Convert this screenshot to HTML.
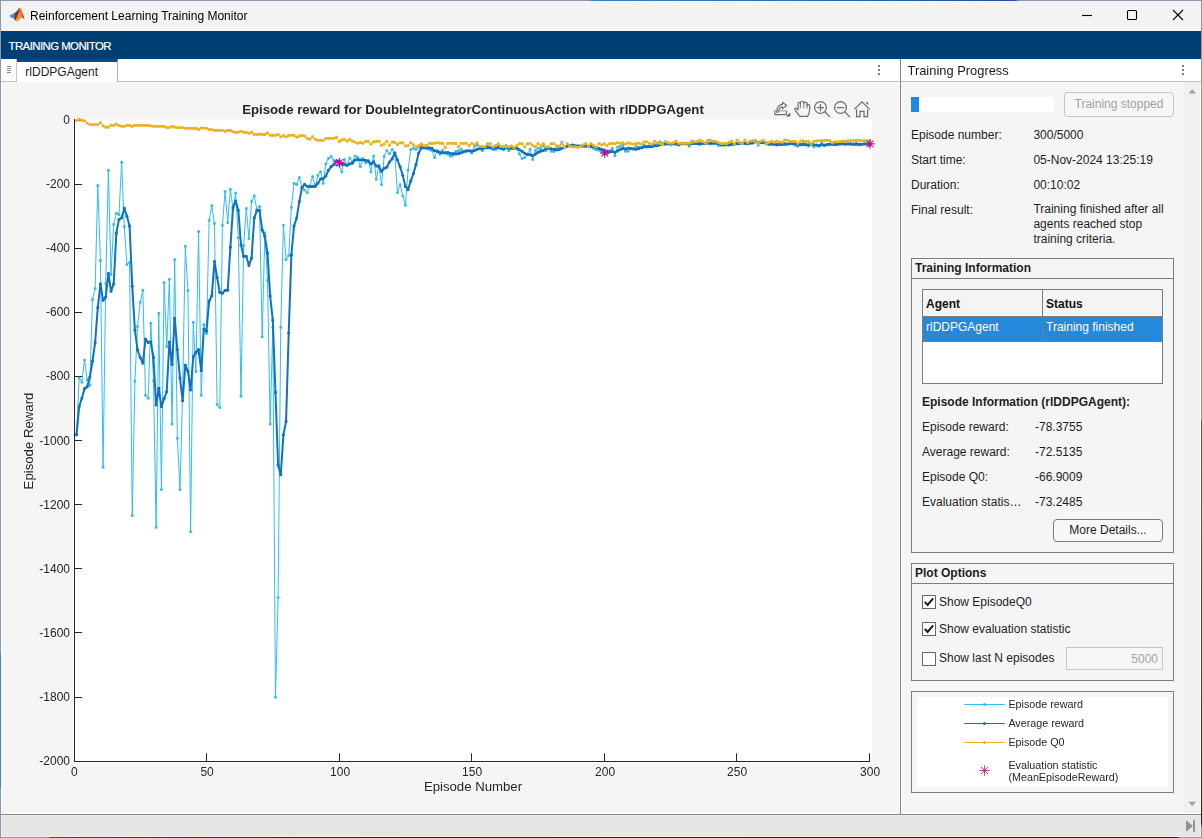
<!DOCTYPE html>
<html lang="en">
<head>
<meta charset="utf-8">
<title>Reinforcement Learning Training Monitor</title>
<style>
*{box-sizing:border-box;margin:0;padding:0}
html,body{width:1202px;height:838px;overflow:hidden;background:#f3f3f3}
body{position:relative;font-family:"Liberation Sans",sans-serif;font-size:12px;color:#1e1e1e;line-height:1}
.abs{position:absolute}
.t{position:absolute;white-space:nowrap;line-height:14px;height:14px}
#frame{position:absolute;left:0;top:0;width:1202px;height:838px;pointer-events:none;z-index:50}
#frame i{position:absolute;display:block}
#bt{left:0;top:0;width:1202px;height:1px;background:linear-gradient(90deg,#8d98a8 0,#8d98a8 588px,#3f7fc0 592px,#2f6cb8 800px,#2450a8 1000px,#2450a8 1015px,#8d98a8 1019px,#8d98a8 100%)}
#bb{left:0;top:837px;width:1202px;height:1px;background:linear-gradient(90deg,#8d98a8 0,#8d98a8 47px,#2a4f90 51px,#1b2a5c 300px,#16214f 1176px,#8d98a8 1181px,#8d98a8 100%)}
#bl{left:0;top:0;width:1px;height:838px;background:linear-gradient(180deg,#8d98a8 0,#8d98a8 652px,#4a7fbd 655px,#4a7fbd 786px,#8d98a8 789px,#8d98a8 100%)}
#br{left:1201px;top:0;width:1px;height:838px;background:linear-gradient(180deg,#8d98a8 0,#8d98a8 418px,#3d5fa8 422px,#2b3f80 700px,#1a1d33 812px,#1a1d33 824px,#8d98a8 827px,#8d98a8 100%)}
#titlebar{left:1px;top:1px;width:1200px;height:30px;background:#f3f3f3}
#band{left:1px;top:31px;width:1200px;height:28px;background:#003f73}
#tabs{left:1px;top:59px;width:899px;height:23px;background:#fff;border-bottom:1px solid #c0c0c0}
#handle{left:1px;top:59px;width:16px;height:22px;border-right:1px solid #c4c4c4}
#tab{left:17px;top:59px;width:101px;height:23px;background:#fff;border-top:3px solid #004b8d;border-right:1px solid #b0b0b0}
#plotbg{left:1px;top:82px;width:899px;height:732px;background:#f5f5f5;border:1px solid #fff;border-top:0}
#divider{left:900px;top:59px;width:1px;height:755px;background:#808080}
#rhead{left:901px;top:59px;width:300px;height:23px;background:#fff;border-bottom:1px solid #c0c0c0}
#rpanel{left:901px;top:82px;width:300px;height:732px;background:#f5f5f5;border:1px solid #fff;border-top:0}
#scroll{left:1184px;top:82px;width:16px;height:731px;background:#f1f1f1}
#status{left:1px;top:814px;width:1200px;height:23px;background:#e6e6e6;border-top:1px solid #858585;box-shadow:inset 0 0 0 1px #eeeeee}
.grp{position:absolute;border:1px solid #7d7d7d}
.grp .hd{position:absolute;left:0;top:0;right:0;height:20px;border-bottom:1px solid #7d7d7d;font-weight:bold;padding:2px 0 0 3px;line-height:14px}
.btn{position:absolute;border:1px solid #7a7a7a;border-radius:4px;text-align:center;background:#f8f8f8}
.cb{position:absolute;width:14px;height:14px;border:1px solid #666;background:#fff;border-radius:0.5px}
</style>
</head>
<body>
<div id="titlebar" class="abs"></div>
<svg class="abs" style="left:4px;top:2px" width="30" height="26" viewBox="0 0 30 26">
 <defs>
  <linearGradient id="lg1" x1="0" y1="0" x2="1" y2="0"><stop offset="0" stop-color="#55aeea"/><stop offset="0.6" stop-color="#2f83cf"/><stop offset="1" stop-color="#23508f"/></linearGradient>
  <linearGradient id="lg2" x1="0" y1="0" x2="0.6" y2="1"><stop offset="0" stop-color="#3b2a55"/><stop offset="0.45" stop-color="#7c1f1c"/><stop offset="1" stop-color="#c2401c"/></linearGradient>
  <linearGradient id="lg3" x1="0.6" y1="0" x2="0.3" y2="1"><stop offset="0" stop-color="#dd661e"/><stop offset="0.5" stop-color="#f08c28"/><stop offset="0.85" stop-color="#f3a02b"/><stop offset="1" stop-color="#f9bb2d"/></linearGradient>
  <linearGradient id="lg4" x1="0" y1="0" x2="1" y2="1"><stop offset="0" stop-color="#d9541f"/><stop offset="1" stop-color="#c2301e"/></linearGradient>
 </defs>
 <path d="M5.1,13.5 L8.4,12.2 L10.3,11.1 L12.4,9.4 L14.6,6.7 L15.3,5.9 L13.6,10.6 L11.6,13.6 L10.4,16.3 L7.5,15.9 L6.2,14.9 Z" fill="url(#lg1)"/>
 <path d="M10.6,12.2 L13,10.2 L15,6.6 L15.8,6.2 L14.9,11 L12.8,17.4 L11.2,18.8 L10,16.4 L10.9,13.8 Z" fill="url(#lg2)"/>
 <path d="M15.3,5.8 C16,5.6 16.5,5.9 16.8,6.6 L17.4,10 L17.9,14.8 L15.6,17.6 L13.3,19.8 L12.4,20 L11.2,18.8 L13.1,15 L14.6,10.4 Z" fill="url(#lg3)"/>
 <path d="M16.6,6.1 C17.5,7.6 18.4,10.6 19.4,13.6 C19.9,15.2 20.3,16.6 20.6,17.7 C19.6,16.6 18.8,15.6 17.8,15.2 L17.4,10.2 Z" fill="url(#lg4)"/>
</svg>
<div class="t" style="left:30px;top:8px;font-size:12px;color:#000;line-height:16px;height:16px;will-change:transform">Reinforcement Learning Training Monitor</div>
<svg class="abs" style="left:1060px;top:1px" width="141" height="30" viewBox="0 0 141 30" fill="none" stroke="#000" stroke-width="1.1">
 <path d="M22,14.5h10"/>
 <rect x="67.5" y="9.5" width="9" height="9" rx="1"/>
 <path d="M113,9l10,10M123,9l-10,10"/>
</svg>
<div id="band" class="abs"></div>
<div class="t" style="left:8.5px;top:39px;color:#fff;font-size:11.4px;letter-spacing:-0.55px;-webkit-text-stroke:0.2px #fff">TRAINING MONITOR</div>
<div id="tabs" class="abs"></div>
<div id="handle" class="abs"></div>
<div id="tab" class="abs"></div>
<svg class="abs" style="left:6px;top:65px" width="7" height="9" viewBox="0 0 7 9"><path d="M1,1.5h4M1,3.5h4M1,5.5h4M1,7.5h4" stroke="#8c8c8c" stroke-width="1"/></svg>
<div class="t" style="left:25.3px;top:64.5px">rlDDPGAgent</div>
<svg class="abs" style="left:877px;top:64px" width="4" height="12" viewBox="0 0 4 12" fill="#555"><circle cx="2" cy="2" r="1"/><circle cx="2" cy="6" r="1"/><circle cx="2" cy="10" r="1"/></svg>
<div id="plotbg" class="abs"></div>
<svg id="plot" width="900" height="733" viewBox="0 82 900 733" style="position:absolute;left:0;top:82px;will-change:transform" font-family="'Liberation Sans',sans-serif" font-size="12" fill="#262626">
<rect x="73" y="119.4" width="799.2" height="643.7" fill="#fff"/>
<path d="M74.5,119V761.5M74,761.5H870" stroke="#262626" stroke-width="1" fill="none"/><path d="M74.5,120.5h7.6M74.5,184.5h7.6M74.5,248.5h7.6M74.5,312.5h7.6M74.5,376.5h7.6M74.5,440.5h7.6M74.5,504.5h7.6M74.5,568.5h7.6M74.5,632.5h7.6M74.5,697.5h7.6M74.5,761.5h7.6M74.5,761.5v-8.2M206.5,761.5v-8.2M339.5,761.5v-8.2M471.5,761.5v-8.2M604.5,761.5v-8.2M736.5,761.5v-8.2M869.5,761.5v-8.2" stroke="#262626" stroke-width="1" fill="none"/>
<g><polyline points="76.55,434.66 79.20,377.96 81.86,382.13 84.51,360.02 87.16,379.56 89.81,385.33 92.46,299.48 95.12,288.58 97.77,185.43 100.42,260.39 103.07,467.34 105.72,283.46 108.38,170.37 111.03,274.49 113.68,224.19 116.33,213.30 118.98,214.58 121.64,162.37 124.29,226.44 126.94,264.56 129.59,262.32 132.24,515.39 134.90,381.16 137.55,326.39 140.20,302.36 142.85,290.19 145.50,395.26 148.16,398.14 150.81,323.18 153.46,380.52 156.11,527.24 158.76,313.25 161.42,489.44 164.07,282.50 166.72,346.57 169.37,279.29 172.02,424.09 174.68,259.43 177.33,438.19 179.98,489.44 182.63,392.06 185.28,246.30 187.94,290.51 190.59,531.73 193.24,322.22 195.89,371.55 198.54,231.56 201.20,395.26 203.85,324.46 206.50,333.43 209.15,220.35 211.80,205.61 214.46,223.55 217.11,404.55 219.76,407.43 222.41,225.15 225.06,191.52 227.72,222.59 230.37,189.28 233.02,208.82 235.67,193.12 238.32,237.65 240.98,396.22 243.63,245.66 246.28,208.50 248.93,238.61 251.58,201.13 254.24,195.68 256.89,209.46 259.54,206.57 262.19,336.64 264.84,232.84 267.50,280.25 270.15,424.09 272.80,327.03 275.45,697.35 278.10,597.40 280.76,327.35 283.41,225.15 286.06,259.43 288.71,255.59 291.36,207.21 294.02,183.19 296.67,184.47 299.32,177.42 301.97,187.35 304.62,189.92 307.28,192.48 309.93,185.75 312.58,176.46 315.23,186.39 317.88,175.18 320.54,171.66 323.19,183.19 325.84,163.65 328.49,158.20 331.14,156.60 333.80,160.44 336.45,164.93 339.10,165.25 341.75,171.66 344.40,159.48 347.06,165.25 349.71,157.88 352.36,161.40 355.01,155.96 357.66,157.56 360.32,166.53 362.97,158.52 365.62,162.69 368.27,160.44 370.92,171.66 373.58,155.96 376.23,179.34 378.88,165.25 381.53,184.47 384.18,156.28 386.84,150.51 389.49,153.72 392.14,149.55 394.79,154.04 397.44,192.48 400.10,184.47 402.75,195.68 405.40,205.29 408.05,170.37 410.70,149.55 413.36,148.27 416.01,149.55 418.66,147.31 421.31,145.71 423.96,147.95 426.62,148.59 429.27,149.55 431.92,150.51 434.57,157.56 437.22,150.51 439.88,154.36 442.53,150.19 445.18,152.44 447.83,154.36 450.48,156.28 453.14,155.32 455.79,151.47 458.44,150.83 461.09,149.23 463.74,151.79 466.40,151.15 469.05,150.83 471.70,153.08 474.35,146.35 477.00,145.07 479.66,148.27 482.31,150.83 484.96,147.63 487.61,146.03 490.26,147.31 492.92,149.55 495.57,149.55 498.22,146.35 500.87,148.27 503.52,149.87 506.18,145.39 508.83,150.83 511.48,147.31 514.13,147.95 516.78,148.59 519.44,154.04 522.09,158.52 524.74,157.56 527.39,154.04 530.04,149.23 532.70,159.48 535.35,150.51 538.00,148.27 540.65,148.59 543.30,145.71 545.96,150.51 548.61,148.27 551.26,151.15 553.91,151.47 556.56,148.27 559.22,148.27 561.87,142.18 564.52,146.67 567.17,145.39 569.82,146.03 572.48,145.07 575.13,146.03 577.78,146.99 580.43,146.03 583.08,145.71 585.74,146.03 588.39,146.35 591.04,146.99 593.69,148.59 596.34,149.87 599.00,150.19 601.65,151.47 604.30,153.40 606.95,153.40 609.60,150.51 612.26,148.27 614.91,155.64 617.56,146.99 620.21,146.35 622.86,145.07 625.52,151.15 628.17,151.15 630.82,148.80 633.47,148.67 636.12,146.35 638.78,147.32 641.43,147.71 644.08,144.75 646.73,146.97 649.38,146.31 652.04,146.74 654.69,144.40 657.34,144.46 659.99,141.86 662.64,143.24 665.30,144.38 667.95,144.12 670.60,144.81 673.25,143.41 675.90,143.67 678.56,145.13 681.21,143.02 683.86,143.06 686.51,143.76 689.16,146.35 691.82,141.06 694.47,142.89 697.12,143.59 699.77,144.43 702.42,143.83 705.08,142.92 707.73,140.58 710.38,143.97 713.03,143.68 715.68,143.56 718.34,145.39 720.99,145.58 723.64,145.16 726.29,144.19 728.94,144.24 731.60,143.34 734.25,143.74 736.90,143.15 739.55,143.45 742.20,143.06 744.86,143.50 747.51,143.88 750.16,142.25 752.81,142.23 755.46,140.58 758.12,145.23 760.77,142.38 763.42,142.52 766.07,143.96 768.72,144.75 771.38,144.71 774.03,144.58 776.68,145.07 779.33,143.51 781.98,144.33 784.64,143.33 787.29,144.36 789.94,143.08 792.59,143.33 795.24,145.23 797.90,146.35 800.55,144.84 803.20,143.31 805.85,144.33 808.50,146.03 811.16,143.43 813.81,146.67 816.46,144.98 819.11,146.35 821.76,142.18 824.42,145.46 827.07,144.14 829.72,143.64 832.37,144.62 835.02,144.87 837.68,144.16 840.33,142.70 842.98,143.13 845.63,144.52 848.28,144.19 850.94,144.52 853.59,144.61 856.24,142.96 858.89,145.07 861.54,144.35 864.20,143.49 866.85,143.74 869.50,145.52" fill="none" stroke="#2FBEEF" stroke-width="1" stroke-linejoin="round"/>
<path d="M75.05,434.66a1.5,1.5 0 1,0 3.0,0a1.5,1.5 0 1,0 -3.0,0M77.70,377.96a1.5,1.5 0 1,0 3.0,0a1.5,1.5 0 1,0 -3.0,0M80.36,382.13a1.5,1.5 0 1,0 3.0,0a1.5,1.5 0 1,0 -3.0,0M83.01,360.02a1.5,1.5 0 1,0 3.0,0a1.5,1.5 0 1,0 -3.0,0M85.66,379.56a1.5,1.5 0 1,0 3.0,0a1.5,1.5 0 1,0 -3.0,0M88.31,385.33a1.5,1.5 0 1,0 3.0,0a1.5,1.5 0 1,0 -3.0,0M90.96,299.48a1.5,1.5 0 1,0 3.0,0a1.5,1.5 0 1,0 -3.0,0M93.62,288.58a1.5,1.5 0 1,0 3.0,0a1.5,1.5 0 1,0 -3.0,0M96.27,185.43a1.5,1.5 0 1,0 3.0,0a1.5,1.5 0 1,0 -3.0,0M98.92,260.39a1.5,1.5 0 1,0 3.0,0a1.5,1.5 0 1,0 -3.0,0M101.57,467.34a1.5,1.5 0 1,0 3.0,0a1.5,1.5 0 1,0 -3.0,0M104.22,283.46a1.5,1.5 0 1,0 3.0,0a1.5,1.5 0 1,0 -3.0,0M106.88,170.37a1.5,1.5 0 1,0 3.0,0a1.5,1.5 0 1,0 -3.0,0M109.53,274.49a1.5,1.5 0 1,0 3.0,0a1.5,1.5 0 1,0 -3.0,0M112.18,224.19a1.5,1.5 0 1,0 3.0,0a1.5,1.5 0 1,0 -3.0,0M114.83,213.30a1.5,1.5 0 1,0 3.0,0a1.5,1.5 0 1,0 -3.0,0M117.48,214.58a1.5,1.5 0 1,0 3.0,0a1.5,1.5 0 1,0 -3.0,0M120.14,162.37a1.5,1.5 0 1,0 3.0,0a1.5,1.5 0 1,0 -3.0,0M122.79,226.44a1.5,1.5 0 1,0 3.0,0a1.5,1.5 0 1,0 -3.0,0M125.44,264.56a1.5,1.5 0 1,0 3.0,0a1.5,1.5 0 1,0 -3.0,0M128.09,262.32a1.5,1.5 0 1,0 3.0,0a1.5,1.5 0 1,0 -3.0,0M130.74,515.39a1.5,1.5 0 1,0 3.0,0a1.5,1.5 0 1,0 -3.0,0M133.40,381.16a1.5,1.5 0 1,0 3.0,0a1.5,1.5 0 1,0 -3.0,0M136.05,326.39a1.5,1.5 0 1,0 3.0,0a1.5,1.5 0 1,0 -3.0,0M138.70,302.36a1.5,1.5 0 1,0 3.0,0a1.5,1.5 0 1,0 -3.0,0M141.35,290.19a1.5,1.5 0 1,0 3.0,0a1.5,1.5 0 1,0 -3.0,0M144.00,395.26a1.5,1.5 0 1,0 3.0,0a1.5,1.5 0 1,0 -3.0,0M146.66,398.14a1.5,1.5 0 1,0 3.0,0a1.5,1.5 0 1,0 -3.0,0M149.31,323.18a1.5,1.5 0 1,0 3.0,0a1.5,1.5 0 1,0 -3.0,0M151.96,380.52a1.5,1.5 0 1,0 3.0,0a1.5,1.5 0 1,0 -3.0,0M154.61,527.24a1.5,1.5 0 1,0 3.0,0a1.5,1.5 0 1,0 -3.0,0M157.26,313.25a1.5,1.5 0 1,0 3.0,0a1.5,1.5 0 1,0 -3.0,0M159.92,489.44a1.5,1.5 0 1,0 3.0,0a1.5,1.5 0 1,0 -3.0,0M162.57,282.50a1.5,1.5 0 1,0 3.0,0a1.5,1.5 0 1,0 -3.0,0M165.22,346.57a1.5,1.5 0 1,0 3.0,0a1.5,1.5 0 1,0 -3.0,0M167.87,279.29a1.5,1.5 0 1,0 3.0,0a1.5,1.5 0 1,0 -3.0,0M170.52,424.09a1.5,1.5 0 1,0 3.0,0a1.5,1.5 0 1,0 -3.0,0M173.18,259.43a1.5,1.5 0 1,0 3.0,0a1.5,1.5 0 1,0 -3.0,0M175.83,438.19a1.5,1.5 0 1,0 3.0,0a1.5,1.5 0 1,0 -3.0,0M178.48,489.44a1.5,1.5 0 1,0 3.0,0a1.5,1.5 0 1,0 -3.0,0M181.13,392.06a1.5,1.5 0 1,0 3.0,0a1.5,1.5 0 1,0 -3.0,0M183.78,246.30a1.5,1.5 0 1,0 3.0,0a1.5,1.5 0 1,0 -3.0,0M186.44,290.51a1.5,1.5 0 1,0 3.0,0a1.5,1.5 0 1,0 -3.0,0M189.09,531.73a1.5,1.5 0 1,0 3.0,0a1.5,1.5 0 1,0 -3.0,0M191.74,322.22a1.5,1.5 0 1,0 3.0,0a1.5,1.5 0 1,0 -3.0,0M194.39,371.55a1.5,1.5 0 1,0 3.0,0a1.5,1.5 0 1,0 -3.0,0M197.04,231.56a1.5,1.5 0 1,0 3.0,0a1.5,1.5 0 1,0 -3.0,0M199.70,395.26a1.5,1.5 0 1,0 3.0,0a1.5,1.5 0 1,0 -3.0,0M202.35,324.46a1.5,1.5 0 1,0 3.0,0a1.5,1.5 0 1,0 -3.0,0M205.00,333.43a1.5,1.5 0 1,0 3.0,0a1.5,1.5 0 1,0 -3.0,0M207.65,220.35a1.5,1.5 0 1,0 3.0,0a1.5,1.5 0 1,0 -3.0,0M210.30,205.61a1.5,1.5 0 1,0 3.0,0a1.5,1.5 0 1,0 -3.0,0M212.96,223.55a1.5,1.5 0 1,0 3.0,0a1.5,1.5 0 1,0 -3.0,0M215.61,404.55a1.5,1.5 0 1,0 3.0,0a1.5,1.5 0 1,0 -3.0,0M218.26,407.43a1.5,1.5 0 1,0 3.0,0a1.5,1.5 0 1,0 -3.0,0M220.91,225.15a1.5,1.5 0 1,0 3.0,0a1.5,1.5 0 1,0 -3.0,0M223.56,191.52a1.5,1.5 0 1,0 3.0,0a1.5,1.5 0 1,0 -3.0,0M226.22,222.59a1.5,1.5 0 1,0 3.0,0a1.5,1.5 0 1,0 -3.0,0M228.87,189.28a1.5,1.5 0 1,0 3.0,0a1.5,1.5 0 1,0 -3.0,0M231.52,208.82a1.5,1.5 0 1,0 3.0,0a1.5,1.5 0 1,0 -3.0,0M234.17,193.12a1.5,1.5 0 1,0 3.0,0a1.5,1.5 0 1,0 -3.0,0M236.82,237.65a1.5,1.5 0 1,0 3.0,0a1.5,1.5 0 1,0 -3.0,0M239.48,396.22a1.5,1.5 0 1,0 3.0,0a1.5,1.5 0 1,0 -3.0,0M242.13,245.66a1.5,1.5 0 1,0 3.0,0a1.5,1.5 0 1,0 -3.0,0M244.78,208.50a1.5,1.5 0 1,0 3.0,0a1.5,1.5 0 1,0 -3.0,0M247.43,238.61a1.5,1.5 0 1,0 3.0,0a1.5,1.5 0 1,0 -3.0,0M250.08,201.13a1.5,1.5 0 1,0 3.0,0a1.5,1.5 0 1,0 -3.0,0M252.74,195.68a1.5,1.5 0 1,0 3.0,0a1.5,1.5 0 1,0 -3.0,0M255.39,209.46a1.5,1.5 0 1,0 3.0,0a1.5,1.5 0 1,0 -3.0,0M258.04,206.57a1.5,1.5 0 1,0 3.0,0a1.5,1.5 0 1,0 -3.0,0M260.69,336.64a1.5,1.5 0 1,0 3.0,0a1.5,1.5 0 1,0 -3.0,0M263.34,232.84a1.5,1.5 0 1,0 3.0,0a1.5,1.5 0 1,0 -3.0,0M266.00,280.25a1.5,1.5 0 1,0 3.0,0a1.5,1.5 0 1,0 -3.0,0M268.65,424.09a1.5,1.5 0 1,0 3.0,0a1.5,1.5 0 1,0 -3.0,0M271.30,327.03a1.5,1.5 0 1,0 3.0,0a1.5,1.5 0 1,0 -3.0,0M273.95,697.35a1.5,1.5 0 1,0 3.0,0a1.5,1.5 0 1,0 -3.0,0M276.60,597.40a1.5,1.5 0 1,0 3.0,0a1.5,1.5 0 1,0 -3.0,0M279.26,327.35a1.5,1.5 0 1,0 3.0,0a1.5,1.5 0 1,0 -3.0,0M281.91,225.15a1.5,1.5 0 1,0 3.0,0a1.5,1.5 0 1,0 -3.0,0M284.56,259.43a1.5,1.5 0 1,0 3.0,0a1.5,1.5 0 1,0 -3.0,0M287.21,255.59a1.5,1.5 0 1,0 3.0,0a1.5,1.5 0 1,0 -3.0,0M289.86,207.21a1.5,1.5 0 1,0 3.0,0a1.5,1.5 0 1,0 -3.0,0M292.52,183.19a1.5,1.5 0 1,0 3.0,0a1.5,1.5 0 1,0 -3.0,0M295.17,184.47a1.5,1.5 0 1,0 3.0,0a1.5,1.5 0 1,0 -3.0,0M297.82,177.42a1.5,1.5 0 1,0 3.0,0a1.5,1.5 0 1,0 -3.0,0M300.47,187.35a1.5,1.5 0 1,0 3.0,0a1.5,1.5 0 1,0 -3.0,0M303.12,189.92a1.5,1.5 0 1,0 3.0,0a1.5,1.5 0 1,0 -3.0,0M305.78,192.48a1.5,1.5 0 1,0 3.0,0a1.5,1.5 0 1,0 -3.0,0M308.43,185.75a1.5,1.5 0 1,0 3.0,0a1.5,1.5 0 1,0 -3.0,0M311.08,176.46a1.5,1.5 0 1,0 3.0,0a1.5,1.5 0 1,0 -3.0,0M313.73,186.39a1.5,1.5 0 1,0 3.0,0a1.5,1.5 0 1,0 -3.0,0M316.38,175.18a1.5,1.5 0 1,0 3.0,0a1.5,1.5 0 1,0 -3.0,0M319.04,171.66a1.5,1.5 0 1,0 3.0,0a1.5,1.5 0 1,0 -3.0,0M321.69,183.19a1.5,1.5 0 1,0 3.0,0a1.5,1.5 0 1,0 -3.0,0M324.34,163.65a1.5,1.5 0 1,0 3.0,0a1.5,1.5 0 1,0 -3.0,0M326.99,158.20a1.5,1.5 0 1,0 3.0,0a1.5,1.5 0 1,0 -3.0,0M329.64,156.60a1.5,1.5 0 1,0 3.0,0a1.5,1.5 0 1,0 -3.0,0M332.30,160.44a1.5,1.5 0 1,0 3.0,0a1.5,1.5 0 1,0 -3.0,0M334.95,164.93a1.5,1.5 0 1,0 3.0,0a1.5,1.5 0 1,0 -3.0,0M337.60,165.25a1.5,1.5 0 1,0 3.0,0a1.5,1.5 0 1,0 -3.0,0M340.25,171.66a1.5,1.5 0 1,0 3.0,0a1.5,1.5 0 1,0 -3.0,0M342.90,159.48a1.5,1.5 0 1,0 3.0,0a1.5,1.5 0 1,0 -3.0,0M345.56,165.25a1.5,1.5 0 1,0 3.0,0a1.5,1.5 0 1,0 -3.0,0M348.21,157.88a1.5,1.5 0 1,0 3.0,0a1.5,1.5 0 1,0 -3.0,0M350.86,161.40a1.5,1.5 0 1,0 3.0,0a1.5,1.5 0 1,0 -3.0,0M353.51,155.96a1.5,1.5 0 1,0 3.0,0a1.5,1.5 0 1,0 -3.0,0M356.16,157.56a1.5,1.5 0 1,0 3.0,0a1.5,1.5 0 1,0 -3.0,0M358.82,166.53a1.5,1.5 0 1,0 3.0,0a1.5,1.5 0 1,0 -3.0,0M361.47,158.52a1.5,1.5 0 1,0 3.0,0a1.5,1.5 0 1,0 -3.0,0M364.12,162.69a1.5,1.5 0 1,0 3.0,0a1.5,1.5 0 1,0 -3.0,0M366.77,160.44a1.5,1.5 0 1,0 3.0,0a1.5,1.5 0 1,0 -3.0,0M369.42,171.66a1.5,1.5 0 1,0 3.0,0a1.5,1.5 0 1,0 -3.0,0M372.08,155.96a1.5,1.5 0 1,0 3.0,0a1.5,1.5 0 1,0 -3.0,0M374.73,179.34a1.5,1.5 0 1,0 3.0,0a1.5,1.5 0 1,0 -3.0,0M377.38,165.25a1.5,1.5 0 1,0 3.0,0a1.5,1.5 0 1,0 -3.0,0M380.03,184.47a1.5,1.5 0 1,0 3.0,0a1.5,1.5 0 1,0 -3.0,0M382.68,156.28a1.5,1.5 0 1,0 3.0,0a1.5,1.5 0 1,0 -3.0,0M385.34,150.51a1.5,1.5 0 1,0 3.0,0a1.5,1.5 0 1,0 -3.0,0M387.99,153.72a1.5,1.5 0 1,0 3.0,0a1.5,1.5 0 1,0 -3.0,0M390.64,149.55a1.5,1.5 0 1,0 3.0,0a1.5,1.5 0 1,0 -3.0,0M393.29,154.04a1.5,1.5 0 1,0 3.0,0a1.5,1.5 0 1,0 -3.0,0M395.94,192.48a1.5,1.5 0 1,0 3.0,0a1.5,1.5 0 1,0 -3.0,0M398.60,184.47a1.5,1.5 0 1,0 3.0,0a1.5,1.5 0 1,0 -3.0,0M401.25,195.68a1.5,1.5 0 1,0 3.0,0a1.5,1.5 0 1,0 -3.0,0M403.90,205.29a1.5,1.5 0 1,0 3.0,0a1.5,1.5 0 1,0 -3.0,0M406.55,170.37a1.5,1.5 0 1,0 3.0,0a1.5,1.5 0 1,0 -3.0,0M409.20,149.55a1.5,1.5 0 1,0 3.0,0a1.5,1.5 0 1,0 -3.0,0M411.86,148.27a1.5,1.5 0 1,0 3.0,0a1.5,1.5 0 1,0 -3.0,0M414.51,149.55a1.5,1.5 0 1,0 3.0,0a1.5,1.5 0 1,0 -3.0,0M417.16,147.31a1.5,1.5 0 1,0 3.0,0a1.5,1.5 0 1,0 -3.0,0M419.81,145.71a1.5,1.5 0 1,0 3.0,0a1.5,1.5 0 1,0 -3.0,0M422.46,147.95a1.5,1.5 0 1,0 3.0,0a1.5,1.5 0 1,0 -3.0,0M425.12,148.59a1.5,1.5 0 1,0 3.0,0a1.5,1.5 0 1,0 -3.0,0M427.77,149.55a1.5,1.5 0 1,0 3.0,0a1.5,1.5 0 1,0 -3.0,0M430.42,150.51a1.5,1.5 0 1,0 3.0,0a1.5,1.5 0 1,0 -3.0,0M433.07,157.56a1.5,1.5 0 1,0 3.0,0a1.5,1.5 0 1,0 -3.0,0M435.72,150.51a1.5,1.5 0 1,0 3.0,0a1.5,1.5 0 1,0 -3.0,0M438.38,154.36a1.5,1.5 0 1,0 3.0,0a1.5,1.5 0 1,0 -3.0,0M441.03,150.19a1.5,1.5 0 1,0 3.0,0a1.5,1.5 0 1,0 -3.0,0M443.68,152.44a1.5,1.5 0 1,0 3.0,0a1.5,1.5 0 1,0 -3.0,0M446.33,154.36a1.5,1.5 0 1,0 3.0,0a1.5,1.5 0 1,0 -3.0,0M448.98,156.28a1.5,1.5 0 1,0 3.0,0a1.5,1.5 0 1,0 -3.0,0M451.64,155.32a1.5,1.5 0 1,0 3.0,0a1.5,1.5 0 1,0 -3.0,0M454.29,151.47a1.5,1.5 0 1,0 3.0,0a1.5,1.5 0 1,0 -3.0,0M456.94,150.83a1.5,1.5 0 1,0 3.0,0a1.5,1.5 0 1,0 -3.0,0M459.59,149.23a1.5,1.5 0 1,0 3.0,0a1.5,1.5 0 1,0 -3.0,0M462.24,151.79a1.5,1.5 0 1,0 3.0,0a1.5,1.5 0 1,0 -3.0,0M464.90,151.15a1.5,1.5 0 1,0 3.0,0a1.5,1.5 0 1,0 -3.0,0M467.55,150.83a1.5,1.5 0 1,0 3.0,0a1.5,1.5 0 1,0 -3.0,0M470.20,153.08a1.5,1.5 0 1,0 3.0,0a1.5,1.5 0 1,0 -3.0,0M472.85,146.35a1.5,1.5 0 1,0 3.0,0a1.5,1.5 0 1,0 -3.0,0M475.50,145.07a1.5,1.5 0 1,0 3.0,0a1.5,1.5 0 1,0 -3.0,0M478.16,148.27a1.5,1.5 0 1,0 3.0,0a1.5,1.5 0 1,0 -3.0,0M480.81,150.83a1.5,1.5 0 1,0 3.0,0a1.5,1.5 0 1,0 -3.0,0M483.46,147.63a1.5,1.5 0 1,0 3.0,0a1.5,1.5 0 1,0 -3.0,0M486.11,146.03a1.5,1.5 0 1,0 3.0,0a1.5,1.5 0 1,0 -3.0,0M488.76,147.31a1.5,1.5 0 1,0 3.0,0a1.5,1.5 0 1,0 -3.0,0M491.42,149.55a1.5,1.5 0 1,0 3.0,0a1.5,1.5 0 1,0 -3.0,0M494.07,149.55a1.5,1.5 0 1,0 3.0,0a1.5,1.5 0 1,0 -3.0,0M496.72,146.35a1.5,1.5 0 1,0 3.0,0a1.5,1.5 0 1,0 -3.0,0M499.37,148.27a1.5,1.5 0 1,0 3.0,0a1.5,1.5 0 1,0 -3.0,0M502.02,149.87a1.5,1.5 0 1,0 3.0,0a1.5,1.5 0 1,0 -3.0,0M504.68,145.39a1.5,1.5 0 1,0 3.0,0a1.5,1.5 0 1,0 -3.0,0M507.33,150.83a1.5,1.5 0 1,0 3.0,0a1.5,1.5 0 1,0 -3.0,0M509.98,147.31a1.5,1.5 0 1,0 3.0,0a1.5,1.5 0 1,0 -3.0,0M512.63,147.95a1.5,1.5 0 1,0 3.0,0a1.5,1.5 0 1,0 -3.0,0M515.28,148.59a1.5,1.5 0 1,0 3.0,0a1.5,1.5 0 1,0 -3.0,0M517.94,154.04a1.5,1.5 0 1,0 3.0,0a1.5,1.5 0 1,0 -3.0,0M520.59,158.52a1.5,1.5 0 1,0 3.0,0a1.5,1.5 0 1,0 -3.0,0M523.24,157.56a1.5,1.5 0 1,0 3.0,0a1.5,1.5 0 1,0 -3.0,0M525.89,154.04a1.5,1.5 0 1,0 3.0,0a1.5,1.5 0 1,0 -3.0,0M528.54,149.23a1.5,1.5 0 1,0 3.0,0a1.5,1.5 0 1,0 -3.0,0M531.20,159.48a1.5,1.5 0 1,0 3.0,0a1.5,1.5 0 1,0 -3.0,0M533.85,150.51a1.5,1.5 0 1,0 3.0,0a1.5,1.5 0 1,0 -3.0,0M536.50,148.27a1.5,1.5 0 1,0 3.0,0a1.5,1.5 0 1,0 -3.0,0M539.15,148.59a1.5,1.5 0 1,0 3.0,0a1.5,1.5 0 1,0 -3.0,0M541.80,145.71a1.5,1.5 0 1,0 3.0,0a1.5,1.5 0 1,0 -3.0,0M544.46,150.51a1.5,1.5 0 1,0 3.0,0a1.5,1.5 0 1,0 -3.0,0M547.11,148.27a1.5,1.5 0 1,0 3.0,0a1.5,1.5 0 1,0 -3.0,0M549.76,151.15a1.5,1.5 0 1,0 3.0,0a1.5,1.5 0 1,0 -3.0,0M552.41,151.47a1.5,1.5 0 1,0 3.0,0a1.5,1.5 0 1,0 -3.0,0M555.06,148.27a1.5,1.5 0 1,0 3.0,0a1.5,1.5 0 1,0 -3.0,0M557.72,148.27a1.5,1.5 0 1,0 3.0,0a1.5,1.5 0 1,0 -3.0,0M560.37,142.18a1.5,1.5 0 1,0 3.0,0a1.5,1.5 0 1,0 -3.0,0M563.02,146.67a1.5,1.5 0 1,0 3.0,0a1.5,1.5 0 1,0 -3.0,0M565.67,145.39a1.5,1.5 0 1,0 3.0,0a1.5,1.5 0 1,0 -3.0,0M568.32,146.03a1.5,1.5 0 1,0 3.0,0a1.5,1.5 0 1,0 -3.0,0M570.98,145.07a1.5,1.5 0 1,0 3.0,0a1.5,1.5 0 1,0 -3.0,0M573.63,146.03a1.5,1.5 0 1,0 3.0,0a1.5,1.5 0 1,0 -3.0,0M576.28,146.99a1.5,1.5 0 1,0 3.0,0a1.5,1.5 0 1,0 -3.0,0M578.93,146.03a1.5,1.5 0 1,0 3.0,0a1.5,1.5 0 1,0 -3.0,0M581.58,145.71a1.5,1.5 0 1,0 3.0,0a1.5,1.5 0 1,0 -3.0,0M584.24,146.03a1.5,1.5 0 1,0 3.0,0a1.5,1.5 0 1,0 -3.0,0M586.89,146.35a1.5,1.5 0 1,0 3.0,0a1.5,1.5 0 1,0 -3.0,0M589.54,146.99a1.5,1.5 0 1,0 3.0,0a1.5,1.5 0 1,0 -3.0,0M592.19,148.59a1.5,1.5 0 1,0 3.0,0a1.5,1.5 0 1,0 -3.0,0M594.84,149.87a1.5,1.5 0 1,0 3.0,0a1.5,1.5 0 1,0 -3.0,0M597.50,150.19a1.5,1.5 0 1,0 3.0,0a1.5,1.5 0 1,0 -3.0,0M600.15,151.47a1.5,1.5 0 1,0 3.0,0a1.5,1.5 0 1,0 -3.0,0M602.80,153.40a1.5,1.5 0 1,0 3.0,0a1.5,1.5 0 1,0 -3.0,0M605.45,153.40a1.5,1.5 0 1,0 3.0,0a1.5,1.5 0 1,0 -3.0,0M608.10,150.51a1.5,1.5 0 1,0 3.0,0a1.5,1.5 0 1,0 -3.0,0M610.76,148.27a1.5,1.5 0 1,0 3.0,0a1.5,1.5 0 1,0 -3.0,0M613.41,155.64a1.5,1.5 0 1,0 3.0,0a1.5,1.5 0 1,0 -3.0,0M616.06,146.99a1.5,1.5 0 1,0 3.0,0a1.5,1.5 0 1,0 -3.0,0M618.71,146.35a1.5,1.5 0 1,0 3.0,0a1.5,1.5 0 1,0 -3.0,0M621.36,145.07a1.5,1.5 0 1,0 3.0,0a1.5,1.5 0 1,0 -3.0,0M624.02,151.15a1.5,1.5 0 1,0 3.0,0a1.5,1.5 0 1,0 -3.0,0M626.67,151.15a1.5,1.5 0 1,0 3.0,0a1.5,1.5 0 1,0 -3.0,0M629.32,148.80a1.5,1.5 0 1,0 3.0,0a1.5,1.5 0 1,0 -3.0,0M631.97,148.67a1.5,1.5 0 1,0 3.0,0a1.5,1.5 0 1,0 -3.0,0M634.62,146.35a1.5,1.5 0 1,0 3.0,0a1.5,1.5 0 1,0 -3.0,0M637.28,147.32a1.5,1.5 0 1,0 3.0,0a1.5,1.5 0 1,0 -3.0,0M639.93,147.71a1.5,1.5 0 1,0 3.0,0a1.5,1.5 0 1,0 -3.0,0M642.58,144.75a1.5,1.5 0 1,0 3.0,0a1.5,1.5 0 1,0 -3.0,0M645.23,146.97a1.5,1.5 0 1,0 3.0,0a1.5,1.5 0 1,0 -3.0,0M647.88,146.31a1.5,1.5 0 1,0 3.0,0a1.5,1.5 0 1,0 -3.0,0M650.54,146.74a1.5,1.5 0 1,0 3.0,0a1.5,1.5 0 1,0 -3.0,0M653.19,144.40a1.5,1.5 0 1,0 3.0,0a1.5,1.5 0 1,0 -3.0,0M655.84,144.46a1.5,1.5 0 1,0 3.0,0a1.5,1.5 0 1,0 -3.0,0M658.49,141.86a1.5,1.5 0 1,0 3.0,0a1.5,1.5 0 1,0 -3.0,0M661.14,143.24a1.5,1.5 0 1,0 3.0,0a1.5,1.5 0 1,0 -3.0,0M663.80,144.38a1.5,1.5 0 1,0 3.0,0a1.5,1.5 0 1,0 -3.0,0M666.45,144.12a1.5,1.5 0 1,0 3.0,0a1.5,1.5 0 1,0 -3.0,0M669.10,144.81a1.5,1.5 0 1,0 3.0,0a1.5,1.5 0 1,0 -3.0,0M671.75,143.41a1.5,1.5 0 1,0 3.0,0a1.5,1.5 0 1,0 -3.0,0M674.40,143.67a1.5,1.5 0 1,0 3.0,0a1.5,1.5 0 1,0 -3.0,0M677.06,145.13a1.5,1.5 0 1,0 3.0,0a1.5,1.5 0 1,0 -3.0,0M679.71,143.02a1.5,1.5 0 1,0 3.0,0a1.5,1.5 0 1,0 -3.0,0M682.36,143.06a1.5,1.5 0 1,0 3.0,0a1.5,1.5 0 1,0 -3.0,0M685.01,143.76a1.5,1.5 0 1,0 3.0,0a1.5,1.5 0 1,0 -3.0,0M687.66,146.35a1.5,1.5 0 1,0 3.0,0a1.5,1.5 0 1,0 -3.0,0M690.32,141.06a1.5,1.5 0 1,0 3.0,0a1.5,1.5 0 1,0 -3.0,0M692.97,142.89a1.5,1.5 0 1,0 3.0,0a1.5,1.5 0 1,0 -3.0,0M695.62,143.59a1.5,1.5 0 1,0 3.0,0a1.5,1.5 0 1,0 -3.0,0M698.27,144.43a1.5,1.5 0 1,0 3.0,0a1.5,1.5 0 1,0 -3.0,0M700.92,143.83a1.5,1.5 0 1,0 3.0,0a1.5,1.5 0 1,0 -3.0,0M703.58,142.92a1.5,1.5 0 1,0 3.0,0a1.5,1.5 0 1,0 -3.0,0M706.23,140.58a1.5,1.5 0 1,0 3.0,0a1.5,1.5 0 1,0 -3.0,0M708.88,143.97a1.5,1.5 0 1,0 3.0,0a1.5,1.5 0 1,0 -3.0,0M711.53,143.68a1.5,1.5 0 1,0 3.0,0a1.5,1.5 0 1,0 -3.0,0M714.18,143.56a1.5,1.5 0 1,0 3.0,0a1.5,1.5 0 1,0 -3.0,0M716.84,145.39a1.5,1.5 0 1,0 3.0,0a1.5,1.5 0 1,0 -3.0,0M719.49,145.58a1.5,1.5 0 1,0 3.0,0a1.5,1.5 0 1,0 -3.0,0M722.14,145.16a1.5,1.5 0 1,0 3.0,0a1.5,1.5 0 1,0 -3.0,0M724.79,144.19a1.5,1.5 0 1,0 3.0,0a1.5,1.5 0 1,0 -3.0,0M727.44,144.24a1.5,1.5 0 1,0 3.0,0a1.5,1.5 0 1,0 -3.0,0M730.10,143.34a1.5,1.5 0 1,0 3.0,0a1.5,1.5 0 1,0 -3.0,0M732.75,143.74a1.5,1.5 0 1,0 3.0,0a1.5,1.5 0 1,0 -3.0,0M735.40,143.15a1.5,1.5 0 1,0 3.0,0a1.5,1.5 0 1,0 -3.0,0M738.05,143.45a1.5,1.5 0 1,0 3.0,0a1.5,1.5 0 1,0 -3.0,0M740.70,143.06a1.5,1.5 0 1,0 3.0,0a1.5,1.5 0 1,0 -3.0,0M743.36,143.50a1.5,1.5 0 1,0 3.0,0a1.5,1.5 0 1,0 -3.0,0M746.01,143.88a1.5,1.5 0 1,0 3.0,0a1.5,1.5 0 1,0 -3.0,0M748.66,142.25a1.5,1.5 0 1,0 3.0,0a1.5,1.5 0 1,0 -3.0,0M751.31,142.23a1.5,1.5 0 1,0 3.0,0a1.5,1.5 0 1,0 -3.0,0M753.96,140.58a1.5,1.5 0 1,0 3.0,0a1.5,1.5 0 1,0 -3.0,0M756.62,145.23a1.5,1.5 0 1,0 3.0,0a1.5,1.5 0 1,0 -3.0,0M759.27,142.38a1.5,1.5 0 1,0 3.0,0a1.5,1.5 0 1,0 -3.0,0M761.92,142.52a1.5,1.5 0 1,0 3.0,0a1.5,1.5 0 1,0 -3.0,0M764.57,143.96a1.5,1.5 0 1,0 3.0,0a1.5,1.5 0 1,0 -3.0,0M767.22,144.75a1.5,1.5 0 1,0 3.0,0a1.5,1.5 0 1,0 -3.0,0M769.88,144.71a1.5,1.5 0 1,0 3.0,0a1.5,1.5 0 1,0 -3.0,0M772.53,144.58a1.5,1.5 0 1,0 3.0,0a1.5,1.5 0 1,0 -3.0,0M775.18,145.07a1.5,1.5 0 1,0 3.0,0a1.5,1.5 0 1,0 -3.0,0M777.83,143.51a1.5,1.5 0 1,0 3.0,0a1.5,1.5 0 1,0 -3.0,0M780.48,144.33a1.5,1.5 0 1,0 3.0,0a1.5,1.5 0 1,0 -3.0,0M783.14,143.33a1.5,1.5 0 1,0 3.0,0a1.5,1.5 0 1,0 -3.0,0M785.79,144.36a1.5,1.5 0 1,0 3.0,0a1.5,1.5 0 1,0 -3.0,0M788.44,143.08a1.5,1.5 0 1,0 3.0,0a1.5,1.5 0 1,0 -3.0,0M791.09,143.33a1.5,1.5 0 1,0 3.0,0a1.5,1.5 0 1,0 -3.0,0M793.74,145.23a1.5,1.5 0 1,0 3.0,0a1.5,1.5 0 1,0 -3.0,0M796.40,146.35a1.5,1.5 0 1,0 3.0,0a1.5,1.5 0 1,0 -3.0,0M799.05,144.84a1.5,1.5 0 1,0 3.0,0a1.5,1.5 0 1,0 -3.0,0M801.70,143.31a1.5,1.5 0 1,0 3.0,0a1.5,1.5 0 1,0 -3.0,0M804.35,144.33a1.5,1.5 0 1,0 3.0,0a1.5,1.5 0 1,0 -3.0,0M807.00,146.03a1.5,1.5 0 1,0 3.0,0a1.5,1.5 0 1,0 -3.0,0M809.66,143.43a1.5,1.5 0 1,0 3.0,0a1.5,1.5 0 1,0 -3.0,0M812.31,146.67a1.5,1.5 0 1,0 3.0,0a1.5,1.5 0 1,0 -3.0,0M814.96,144.98a1.5,1.5 0 1,0 3.0,0a1.5,1.5 0 1,0 -3.0,0M817.61,146.35a1.5,1.5 0 1,0 3.0,0a1.5,1.5 0 1,0 -3.0,0M820.26,142.18a1.5,1.5 0 1,0 3.0,0a1.5,1.5 0 1,0 -3.0,0M822.92,145.46a1.5,1.5 0 1,0 3.0,0a1.5,1.5 0 1,0 -3.0,0M825.57,144.14a1.5,1.5 0 1,0 3.0,0a1.5,1.5 0 1,0 -3.0,0M828.22,143.64a1.5,1.5 0 1,0 3.0,0a1.5,1.5 0 1,0 -3.0,0M830.87,144.62a1.5,1.5 0 1,0 3.0,0a1.5,1.5 0 1,0 -3.0,0M833.52,144.87a1.5,1.5 0 1,0 3.0,0a1.5,1.5 0 1,0 -3.0,0M836.18,144.16a1.5,1.5 0 1,0 3.0,0a1.5,1.5 0 1,0 -3.0,0M838.83,142.70a1.5,1.5 0 1,0 3.0,0a1.5,1.5 0 1,0 -3.0,0M841.48,143.13a1.5,1.5 0 1,0 3.0,0a1.5,1.5 0 1,0 -3.0,0M844.13,144.52a1.5,1.5 0 1,0 3.0,0a1.5,1.5 0 1,0 -3.0,0M846.78,144.19a1.5,1.5 0 1,0 3.0,0a1.5,1.5 0 1,0 -3.0,0M849.44,144.52a1.5,1.5 0 1,0 3.0,0a1.5,1.5 0 1,0 -3.0,0M852.09,144.61a1.5,1.5 0 1,0 3.0,0a1.5,1.5 0 1,0 -3.0,0M854.74,142.96a1.5,1.5 0 1,0 3.0,0a1.5,1.5 0 1,0 -3.0,0M857.39,145.07a1.5,1.5 0 1,0 3.0,0a1.5,1.5 0 1,0 -3.0,0M860.04,144.35a1.5,1.5 0 1,0 3.0,0a1.5,1.5 0 1,0 -3.0,0M862.70,143.49a1.5,1.5 0 1,0 3.0,0a1.5,1.5 0 1,0 -3.0,0M865.35,143.74a1.5,1.5 0 1,0 3.0,0a1.5,1.5 0 1,0 -3.0,0M868.00,145.52a1.5,1.5 0 1,0 3.0,0a1.5,1.5 0 1,0 -3.0,0" fill="#2FBEEF"/>
<polyline points="76.55,434.66 79.20,406.31 81.86,398.25 84.51,388.69 87.16,386.87 89.81,377.00 92.46,361.30 95.12,342.59 97.77,307.68 100.42,283.84 103.07,300.24 105.72,297.04 108.38,273.40 111.03,291.21 113.68,283.97 116.33,233.16 118.98,219.39 121.64,217.79 124.29,208.18 126.94,216.25 129.59,226.05 132.24,286.21 134.90,329.97 137.55,349.96 140.20,357.52 142.85,363.10 145.50,339.07 148.16,342.47 150.81,341.83 153.46,357.46 156.11,404.87 158.76,388.47 161.42,406.73 164.07,398.59 166.72,391.80 169.37,342.21 172.02,364.38 174.68,318.38 177.33,349.51 179.98,378.09 182.63,400.64 185.28,365.08 187.94,371.30 190.59,390.01 193.24,356.56 195.89,352.46 198.54,349.51 201.20,370.47 203.85,329.01 206.50,331.25 209.15,301.01 211.80,295.82 214.46,261.48 217.11,277.50 219.76,292.30 222.41,293.26 225.06,290.44 227.72,290.25 230.37,247.19 233.02,207.47 235.67,201.06 238.32,210.29 240.98,245.02 243.63,256.29 246.28,256.23 248.93,265.33 251.58,258.02 254.24,217.91 256.89,210.67 259.54,210.29 262.19,229.90 264.84,236.24 267.50,253.15 270.15,296.08 272.80,320.17 275.45,392.31 278.10,465.22 280.76,474.64 283.41,434.86 286.06,421.34 288.71,332.98 291.36,254.95 294.02,226.12 296.67,217.98 299.32,201.58 301.97,187.93 304.62,184.47 307.28,186.33 309.93,186.58 312.58,186.39 315.23,186.20 317.88,183.25 320.54,179.09 323.19,178.58 325.84,176.01 328.49,170.37 331.14,166.66 333.80,164.42 336.45,160.76 339.10,161.08 341.75,163.78 344.40,164.35 347.06,165.31 349.71,163.90 352.36,163.13 355.01,160.00 357.66,159.61 360.32,159.87 362.97,160.00 365.62,160.25 368.27,161.15 370.92,163.97 373.58,161.85 376.23,166.02 378.88,166.53 381.53,171.34 384.18,168.26 386.84,167.17 389.49,162.05 392.14,158.91 394.79,152.82 397.44,160.06 400.10,166.85 402.75,175.24 405.40,186.39 408.05,189.66 410.70,181.07 413.36,173.83 416.01,164.61 418.66,153.01 421.31,148.08 423.96,147.76 426.62,147.82 429.27,147.82 431.92,148.46 434.57,150.83 437.22,151.35 439.88,152.50 442.53,152.63 445.18,153.01 447.83,152.37 450.48,153.52 453.14,153.72 455.79,153.97 458.44,153.65 461.09,152.63 463.74,151.73 466.40,150.90 469.05,150.77 471.70,151.22 474.35,150.64 477.00,149.30 479.66,148.72 482.31,148.72 484.96,147.63 487.61,147.57 490.26,148.01 492.92,148.27 495.57,148.01 498.22,147.76 500.87,148.21 503.52,148.72 506.18,147.89 508.83,148.14 511.48,148.33 514.13,148.27 516.78,148.01 519.44,149.74 522.09,151.28 524.74,153.33 527.39,154.55 530.04,154.68 532.70,155.77 535.35,154.16 538.00,152.31 540.65,151.22 543.30,150.51 545.96,148.72 548.61,148.27 551.26,148.85 553.91,149.42 556.56,149.94 559.22,149.49 561.87,148.27 564.52,147.37 567.17,146.16 569.82,145.71 572.48,145.07 575.13,145.84 577.78,145.90 580.43,146.03 583.08,145.96 585.74,146.16 588.39,146.22 591.04,146.22 593.69,146.73 596.34,147.57 599.00,148.40 601.65,149.42 604.30,150.71 606.95,151.67 609.60,151.79 612.26,151.41 614.91,152.24 617.56,150.96 620.21,149.55 622.86,148.46 625.52,149.04 628.17,148.14 630.82,148.51 633.47,148.97 636.12,149.23 638.78,148.46 641.43,147.77 644.08,146.96 646.73,146.62 649.38,146.61 652.04,146.49 654.69,145.83 657.34,145.77 659.99,144.75 662.64,144.14 665.30,143.67 667.95,143.61 670.60,143.68 673.25,143.99 675.90,144.08 678.56,144.23 681.21,144.01 683.86,143.66 686.51,143.73 689.16,144.27 691.82,143.45 694.47,143.42 697.12,143.53 699.77,143.66 702.42,143.16 705.08,143.53 707.73,143.07 710.38,143.15 713.03,143.00 715.68,142.94 718.34,143.44 720.99,144.44 723.64,144.67 726.29,144.78 728.94,144.91 731.60,144.50 734.25,144.13 736.90,143.73 739.55,143.58 742.20,143.35 744.86,143.38 747.51,143.41 750.16,143.23 752.81,142.99 755.46,142.49 758.12,142.83 760.77,142.53 763.42,142.59 766.07,142.93 768.72,143.77 771.38,143.66 774.03,144.10 776.68,144.61 779.33,144.52 781.98,144.44 784.64,144.16 787.29,144.12 789.94,143.72 792.59,143.68 795.24,143.86 797.90,144.47 800.55,144.56 803.20,144.61 805.85,144.81 808.50,144.97 811.16,144.39 813.81,144.75 816.46,145.09 819.11,145.49 821.76,144.72 824.42,145.13 827.07,144.62 829.72,144.35 832.37,144.01 835.02,144.55 837.68,144.29 840.33,144.00 842.98,143.90 845.63,143.88 848.28,143.74 850.94,143.81 853.59,144.20 856.24,144.16 858.89,144.27 861.54,144.30 864.20,144.10 866.85,143.92 869.50,144.43" fill="none" stroke="#1171BE" stroke-width="2" stroke-linejoin="round"/>
<path d="M74.95,434.66a1.6,1.6 0 1,0 3.2,0a1.6,1.6 0 1,0 -3.2,0M77.60,406.31a1.6,1.6 0 1,0 3.2,0a1.6,1.6 0 1,0 -3.2,0M80.26,398.25a1.6,1.6 0 1,0 3.2,0a1.6,1.6 0 1,0 -3.2,0M82.91,388.69a1.6,1.6 0 1,0 3.2,0a1.6,1.6 0 1,0 -3.2,0M85.56,386.87a1.6,1.6 0 1,0 3.2,0a1.6,1.6 0 1,0 -3.2,0M88.21,377.00a1.6,1.6 0 1,0 3.2,0a1.6,1.6 0 1,0 -3.2,0M90.86,361.30a1.6,1.6 0 1,0 3.2,0a1.6,1.6 0 1,0 -3.2,0M93.52,342.59a1.6,1.6 0 1,0 3.2,0a1.6,1.6 0 1,0 -3.2,0M96.17,307.68a1.6,1.6 0 1,0 3.2,0a1.6,1.6 0 1,0 -3.2,0M98.82,283.84a1.6,1.6 0 1,0 3.2,0a1.6,1.6 0 1,0 -3.2,0M101.47,300.24a1.6,1.6 0 1,0 3.2,0a1.6,1.6 0 1,0 -3.2,0M104.12,297.04a1.6,1.6 0 1,0 3.2,0a1.6,1.6 0 1,0 -3.2,0M106.78,273.40a1.6,1.6 0 1,0 3.2,0a1.6,1.6 0 1,0 -3.2,0M109.43,291.21a1.6,1.6 0 1,0 3.2,0a1.6,1.6 0 1,0 -3.2,0M112.08,283.97a1.6,1.6 0 1,0 3.2,0a1.6,1.6 0 1,0 -3.2,0M114.73,233.16a1.6,1.6 0 1,0 3.2,0a1.6,1.6 0 1,0 -3.2,0M117.38,219.39a1.6,1.6 0 1,0 3.2,0a1.6,1.6 0 1,0 -3.2,0M120.04,217.79a1.6,1.6 0 1,0 3.2,0a1.6,1.6 0 1,0 -3.2,0M122.69,208.18a1.6,1.6 0 1,0 3.2,0a1.6,1.6 0 1,0 -3.2,0M125.34,216.25a1.6,1.6 0 1,0 3.2,0a1.6,1.6 0 1,0 -3.2,0M127.99,226.05a1.6,1.6 0 1,0 3.2,0a1.6,1.6 0 1,0 -3.2,0M130.64,286.21a1.6,1.6 0 1,0 3.2,0a1.6,1.6 0 1,0 -3.2,0M133.30,329.97a1.6,1.6 0 1,0 3.2,0a1.6,1.6 0 1,0 -3.2,0M135.95,349.96a1.6,1.6 0 1,0 3.2,0a1.6,1.6 0 1,0 -3.2,0M138.60,357.52a1.6,1.6 0 1,0 3.2,0a1.6,1.6 0 1,0 -3.2,0M141.25,363.10a1.6,1.6 0 1,0 3.2,0a1.6,1.6 0 1,0 -3.2,0M143.90,339.07a1.6,1.6 0 1,0 3.2,0a1.6,1.6 0 1,0 -3.2,0M146.56,342.47a1.6,1.6 0 1,0 3.2,0a1.6,1.6 0 1,0 -3.2,0M149.21,341.83a1.6,1.6 0 1,0 3.2,0a1.6,1.6 0 1,0 -3.2,0M151.86,357.46a1.6,1.6 0 1,0 3.2,0a1.6,1.6 0 1,0 -3.2,0M154.51,404.87a1.6,1.6 0 1,0 3.2,0a1.6,1.6 0 1,0 -3.2,0M157.16,388.47a1.6,1.6 0 1,0 3.2,0a1.6,1.6 0 1,0 -3.2,0M159.82,406.73a1.6,1.6 0 1,0 3.2,0a1.6,1.6 0 1,0 -3.2,0M162.47,398.59a1.6,1.6 0 1,0 3.2,0a1.6,1.6 0 1,0 -3.2,0M165.12,391.80a1.6,1.6 0 1,0 3.2,0a1.6,1.6 0 1,0 -3.2,0M167.77,342.21a1.6,1.6 0 1,0 3.2,0a1.6,1.6 0 1,0 -3.2,0M170.42,364.38a1.6,1.6 0 1,0 3.2,0a1.6,1.6 0 1,0 -3.2,0M173.08,318.38a1.6,1.6 0 1,0 3.2,0a1.6,1.6 0 1,0 -3.2,0M175.73,349.51a1.6,1.6 0 1,0 3.2,0a1.6,1.6 0 1,0 -3.2,0M178.38,378.09a1.6,1.6 0 1,0 3.2,0a1.6,1.6 0 1,0 -3.2,0M181.03,400.64a1.6,1.6 0 1,0 3.2,0a1.6,1.6 0 1,0 -3.2,0M183.68,365.08a1.6,1.6 0 1,0 3.2,0a1.6,1.6 0 1,0 -3.2,0M186.34,371.30a1.6,1.6 0 1,0 3.2,0a1.6,1.6 0 1,0 -3.2,0M188.99,390.01a1.6,1.6 0 1,0 3.2,0a1.6,1.6 0 1,0 -3.2,0M191.64,356.56a1.6,1.6 0 1,0 3.2,0a1.6,1.6 0 1,0 -3.2,0M194.29,352.46a1.6,1.6 0 1,0 3.2,0a1.6,1.6 0 1,0 -3.2,0M196.94,349.51a1.6,1.6 0 1,0 3.2,0a1.6,1.6 0 1,0 -3.2,0M199.60,370.47a1.6,1.6 0 1,0 3.2,0a1.6,1.6 0 1,0 -3.2,0M202.25,329.01a1.6,1.6 0 1,0 3.2,0a1.6,1.6 0 1,0 -3.2,0M204.90,331.25a1.6,1.6 0 1,0 3.2,0a1.6,1.6 0 1,0 -3.2,0M207.55,301.01a1.6,1.6 0 1,0 3.2,0a1.6,1.6 0 1,0 -3.2,0M210.20,295.82a1.6,1.6 0 1,0 3.2,0a1.6,1.6 0 1,0 -3.2,0M212.86,261.48a1.6,1.6 0 1,0 3.2,0a1.6,1.6 0 1,0 -3.2,0M215.51,277.50a1.6,1.6 0 1,0 3.2,0a1.6,1.6 0 1,0 -3.2,0M218.16,292.30a1.6,1.6 0 1,0 3.2,0a1.6,1.6 0 1,0 -3.2,0M220.81,293.26a1.6,1.6 0 1,0 3.2,0a1.6,1.6 0 1,0 -3.2,0M223.46,290.44a1.6,1.6 0 1,0 3.2,0a1.6,1.6 0 1,0 -3.2,0M226.12,290.25a1.6,1.6 0 1,0 3.2,0a1.6,1.6 0 1,0 -3.2,0M228.77,247.19a1.6,1.6 0 1,0 3.2,0a1.6,1.6 0 1,0 -3.2,0M231.42,207.47a1.6,1.6 0 1,0 3.2,0a1.6,1.6 0 1,0 -3.2,0M234.07,201.06a1.6,1.6 0 1,0 3.2,0a1.6,1.6 0 1,0 -3.2,0M236.72,210.29a1.6,1.6 0 1,0 3.2,0a1.6,1.6 0 1,0 -3.2,0M239.38,245.02a1.6,1.6 0 1,0 3.2,0a1.6,1.6 0 1,0 -3.2,0M242.03,256.29a1.6,1.6 0 1,0 3.2,0a1.6,1.6 0 1,0 -3.2,0M244.68,256.23a1.6,1.6 0 1,0 3.2,0a1.6,1.6 0 1,0 -3.2,0M247.33,265.33a1.6,1.6 0 1,0 3.2,0a1.6,1.6 0 1,0 -3.2,0M249.98,258.02a1.6,1.6 0 1,0 3.2,0a1.6,1.6 0 1,0 -3.2,0M252.64,217.91a1.6,1.6 0 1,0 3.2,0a1.6,1.6 0 1,0 -3.2,0M255.29,210.67a1.6,1.6 0 1,0 3.2,0a1.6,1.6 0 1,0 -3.2,0M257.94,210.29a1.6,1.6 0 1,0 3.2,0a1.6,1.6 0 1,0 -3.2,0M260.59,229.90a1.6,1.6 0 1,0 3.2,0a1.6,1.6 0 1,0 -3.2,0M263.24,236.24a1.6,1.6 0 1,0 3.2,0a1.6,1.6 0 1,0 -3.2,0M265.90,253.15a1.6,1.6 0 1,0 3.2,0a1.6,1.6 0 1,0 -3.2,0M268.55,296.08a1.6,1.6 0 1,0 3.2,0a1.6,1.6 0 1,0 -3.2,0M271.20,320.17a1.6,1.6 0 1,0 3.2,0a1.6,1.6 0 1,0 -3.2,0M273.85,392.31a1.6,1.6 0 1,0 3.2,0a1.6,1.6 0 1,0 -3.2,0M276.50,465.22a1.6,1.6 0 1,0 3.2,0a1.6,1.6 0 1,0 -3.2,0M279.16,474.64a1.6,1.6 0 1,0 3.2,0a1.6,1.6 0 1,0 -3.2,0M281.81,434.86a1.6,1.6 0 1,0 3.2,0a1.6,1.6 0 1,0 -3.2,0M284.46,421.34a1.6,1.6 0 1,0 3.2,0a1.6,1.6 0 1,0 -3.2,0M287.11,332.98a1.6,1.6 0 1,0 3.2,0a1.6,1.6 0 1,0 -3.2,0M289.76,254.95a1.6,1.6 0 1,0 3.2,0a1.6,1.6 0 1,0 -3.2,0M292.42,226.12a1.6,1.6 0 1,0 3.2,0a1.6,1.6 0 1,0 -3.2,0M295.07,217.98a1.6,1.6 0 1,0 3.2,0a1.6,1.6 0 1,0 -3.2,0M297.72,201.58a1.6,1.6 0 1,0 3.2,0a1.6,1.6 0 1,0 -3.2,0M300.37,187.93a1.6,1.6 0 1,0 3.2,0a1.6,1.6 0 1,0 -3.2,0M303.02,184.47a1.6,1.6 0 1,0 3.2,0a1.6,1.6 0 1,0 -3.2,0M305.68,186.33a1.6,1.6 0 1,0 3.2,0a1.6,1.6 0 1,0 -3.2,0M308.33,186.58a1.6,1.6 0 1,0 3.2,0a1.6,1.6 0 1,0 -3.2,0M310.98,186.39a1.6,1.6 0 1,0 3.2,0a1.6,1.6 0 1,0 -3.2,0M313.63,186.20a1.6,1.6 0 1,0 3.2,0a1.6,1.6 0 1,0 -3.2,0M316.28,183.25a1.6,1.6 0 1,0 3.2,0a1.6,1.6 0 1,0 -3.2,0M318.94,179.09a1.6,1.6 0 1,0 3.2,0a1.6,1.6 0 1,0 -3.2,0M321.59,178.58a1.6,1.6 0 1,0 3.2,0a1.6,1.6 0 1,0 -3.2,0M324.24,176.01a1.6,1.6 0 1,0 3.2,0a1.6,1.6 0 1,0 -3.2,0M326.89,170.37a1.6,1.6 0 1,0 3.2,0a1.6,1.6 0 1,0 -3.2,0M329.54,166.66a1.6,1.6 0 1,0 3.2,0a1.6,1.6 0 1,0 -3.2,0M332.20,164.42a1.6,1.6 0 1,0 3.2,0a1.6,1.6 0 1,0 -3.2,0M334.85,160.76a1.6,1.6 0 1,0 3.2,0a1.6,1.6 0 1,0 -3.2,0M337.50,161.08a1.6,1.6 0 1,0 3.2,0a1.6,1.6 0 1,0 -3.2,0M340.15,163.78a1.6,1.6 0 1,0 3.2,0a1.6,1.6 0 1,0 -3.2,0M342.80,164.35a1.6,1.6 0 1,0 3.2,0a1.6,1.6 0 1,0 -3.2,0M345.46,165.31a1.6,1.6 0 1,0 3.2,0a1.6,1.6 0 1,0 -3.2,0M348.11,163.90a1.6,1.6 0 1,0 3.2,0a1.6,1.6 0 1,0 -3.2,0M350.76,163.13a1.6,1.6 0 1,0 3.2,0a1.6,1.6 0 1,0 -3.2,0M353.41,160.00a1.6,1.6 0 1,0 3.2,0a1.6,1.6 0 1,0 -3.2,0M356.06,159.61a1.6,1.6 0 1,0 3.2,0a1.6,1.6 0 1,0 -3.2,0M358.72,159.87a1.6,1.6 0 1,0 3.2,0a1.6,1.6 0 1,0 -3.2,0M361.37,160.00a1.6,1.6 0 1,0 3.2,0a1.6,1.6 0 1,0 -3.2,0M364.02,160.25a1.6,1.6 0 1,0 3.2,0a1.6,1.6 0 1,0 -3.2,0M366.67,161.15a1.6,1.6 0 1,0 3.2,0a1.6,1.6 0 1,0 -3.2,0M369.32,163.97a1.6,1.6 0 1,0 3.2,0a1.6,1.6 0 1,0 -3.2,0M371.98,161.85a1.6,1.6 0 1,0 3.2,0a1.6,1.6 0 1,0 -3.2,0M374.63,166.02a1.6,1.6 0 1,0 3.2,0a1.6,1.6 0 1,0 -3.2,0M377.28,166.53a1.6,1.6 0 1,0 3.2,0a1.6,1.6 0 1,0 -3.2,0M379.93,171.34a1.6,1.6 0 1,0 3.2,0a1.6,1.6 0 1,0 -3.2,0M382.58,168.26a1.6,1.6 0 1,0 3.2,0a1.6,1.6 0 1,0 -3.2,0M385.24,167.17a1.6,1.6 0 1,0 3.2,0a1.6,1.6 0 1,0 -3.2,0M387.89,162.05a1.6,1.6 0 1,0 3.2,0a1.6,1.6 0 1,0 -3.2,0M390.54,158.91a1.6,1.6 0 1,0 3.2,0a1.6,1.6 0 1,0 -3.2,0M393.19,152.82a1.6,1.6 0 1,0 3.2,0a1.6,1.6 0 1,0 -3.2,0M395.84,160.06a1.6,1.6 0 1,0 3.2,0a1.6,1.6 0 1,0 -3.2,0M398.50,166.85a1.6,1.6 0 1,0 3.2,0a1.6,1.6 0 1,0 -3.2,0M401.15,175.24a1.6,1.6 0 1,0 3.2,0a1.6,1.6 0 1,0 -3.2,0M403.80,186.39a1.6,1.6 0 1,0 3.2,0a1.6,1.6 0 1,0 -3.2,0M406.45,189.66a1.6,1.6 0 1,0 3.2,0a1.6,1.6 0 1,0 -3.2,0M409.10,181.07a1.6,1.6 0 1,0 3.2,0a1.6,1.6 0 1,0 -3.2,0M411.76,173.83a1.6,1.6 0 1,0 3.2,0a1.6,1.6 0 1,0 -3.2,0M414.41,164.61a1.6,1.6 0 1,0 3.2,0a1.6,1.6 0 1,0 -3.2,0M417.06,153.01a1.6,1.6 0 1,0 3.2,0a1.6,1.6 0 1,0 -3.2,0M419.71,148.08a1.6,1.6 0 1,0 3.2,0a1.6,1.6 0 1,0 -3.2,0M422.36,147.76a1.6,1.6 0 1,0 3.2,0a1.6,1.6 0 1,0 -3.2,0M425.02,147.82a1.6,1.6 0 1,0 3.2,0a1.6,1.6 0 1,0 -3.2,0M427.67,147.82a1.6,1.6 0 1,0 3.2,0a1.6,1.6 0 1,0 -3.2,0M430.32,148.46a1.6,1.6 0 1,0 3.2,0a1.6,1.6 0 1,0 -3.2,0M432.97,150.83a1.6,1.6 0 1,0 3.2,0a1.6,1.6 0 1,0 -3.2,0M435.62,151.35a1.6,1.6 0 1,0 3.2,0a1.6,1.6 0 1,0 -3.2,0M438.28,152.50a1.6,1.6 0 1,0 3.2,0a1.6,1.6 0 1,0 -3.2,0M440.93,152.63a1.6,1.6 0 1,0 3.2,0a1.6,1.6 0 1,0 -3.2,0M443.58,153.01a1.6,1.6 0 1,0 3.2,0a1.6,1.6 0 1,0 -3.2,0M446.23,152.37a1.6,1.6 0 1,0 3.2,0a1.6,1.6 0 1,0 -3.2,0M448.88,153.52a1.6,1.6 0 1,0 3.2,0a1.6,1.6 0 1,0 -3.2,0M451.54,153.72a1.6,1.6 0 1,0 3.2,0a1.6,1.6 0 1,0 -3.2,0M454.19,153.97a1.6,1.6 0 1,0 3.2,0a1.6,1.6 0 1,0 -3.2,0M456.84,153.65a1.6,1.6 0 1,0 3.2,0a1.6,1.6 0 1,0 -3.2,0M459.49,152.63a1.6,1.6 0 1,0 3.2,0a1.6,1.6 0 1,0 -3.2,0M462.14,151.73a1.6,1.6 0 1,0 3.2,0a1.6,1.6 0 1,0 -3.2,0M464.80,150.90a1.6,1.6 0 1,0 3.2,0a1.6,1.6 0 1,0 -3.2,0M467.45,150.77a1.6,1.6 0 1,0 3.2,0a1.6,1.6 0 1,0 -3.2,0M470.10,151.22a1.6,1.6 0 1,0 3.2,0a1.6,1.6 0 1,0 -3.2,0M472.75,150.64a1.6,1.6 0 1,0 3.2,0a1.6,1.6 0 1,0 -3.2,0M475.40,149.30a1.6,1.6 0 1,0 3.2,0a1.6,1.6 0 1,0 -3.2,0M478.06,148.72a1.6,1.6 0 1,0 3.2,0a1.6,1.6 0 1,0 -3.2,0M480.71,148.72a1.6,1.6 0 1,0 3.2,0a1.6,1.6 0 1,0 -3.2,0M483.36,147.63a1.6,1.6 0 1,0 3.2,0a1.6,1.6 0 1,0 -3.2,0M486.01,147.57a1.6,1.6 0 1,0 3.2,0a1.6,1.6 0 1,0 -3.2,0M488.66,148.01a1.6,1.6 0 1,0 3.2,0a1.6,1.6 0 1,0 -3.2,0M491.32,148.27a1.6,1.6 0 1,0 3.2,0a1.6,1.6 0 1,0 -3.2,0M493.97,148.01a1.6,1.6 0 1,0 3.2,0a1.6,1.6 0 1,0 -3.2,0M496.62,147.76a1.6,1.6 0 1,0 3.2,0a1.6,1.6 0 1,0 -3.2,0M499.27,148.21a1.6,1.6 0 1,0 3.2,0a1.6,1.6 0 1,0 -3.2,0M501.92,148.72a1.6,1.6 0 1,0 3.2,0a1.6,1.6 0 1,0 -3.2,0M504.58,147.89a1.6,1.6 0 1,0 3.2,0a1.6,1.6 0 1,0 -3.2,0M507.23,148.14a1.6,1.6 0 1,0 3.2,0a1.6,1.6 0 1,0 -3.2,0M509.88,148.33a1.6,1.6 0 1,0 3.2,0a1.6,1.6 0 1,0 -3.2,0M512.53,148.27a1.6,1.6 0 1,0 3.2,0a1.6,1.6 0 1,0 -3.2,0M515.18,148.01a1.6,1.6 0 1,0 3.2,0a1.6,1.6 0 1,0 -3.2,0M517.84,149.74a1.6,1.6 0 1,0 3.2,0a1.6,1.6 0 1,0 -3.2,0M520.49,151.28a1.6,1.6 0 1,0 3.2,0a1.6,1.6 0 1,0 -3.2,0M523.14,153.33a1.6,1.6 0 1,0 3.2,0a1.6,1.6 0 1,0 -3.2,0M525.79,154.55a1.6,1.6 0 1,0 3.2,0a1.6,1.6 0 1,0 -3.2,0M528.44,154.68a1.6,1.6 0 1,0 3.2,0a1.6,1.6 0 1,0 -3.2,0M531.10,155.77a1.6,1.6 0 1,0 3.2,0a1.6,1.6 0 1,0 -3.2,0M533.75,154.16a1.6,1.6 0 1,0 3.2,0a1.6,1.6 0 1,0 -3.2,0M536.40,152.31a1.6,1.6 0 1,0 3.2,0a1.6,1.6 0 1,0 -3.2,0M539.05,151.22a1.6,1.6 0 1,0 3.2,0a1.6,1.6 0 1,0 -3.2,0M541.70,150.51a1.6,1.6 0 1,0 3.2,0a1.6,1.6 0 1,0 -3.2,0M544.36,148.72a1.6,1.6 0 1,0 3.2,0a1.6,1.6 0 1,0 -3.2,0M547.01,148.27a1.6,1.6 0 1,0 3.2,0a1.6,1.6 0 1,0 -3.2,0M549.66,148.85a1.6,1.6 0 1,0 3.2,0a1.6,1.6 0 1,0 -3.2,0M552.31,149.42a1.6,1.6 0 1,0 3.2,0a1.6,1.6 0 1,0 -3.2,0M554.96,149.94a1.6,1.6 0 1,0 3.2,0a1.6,1.6 0 1,0 -3.2,0M557.62,149.49a1.6,1.6 0 1,0 3.2,0a1.6,1.6 0 1,0 -3.2,0M560.27,148.27a1.6,1.6 0 1,0 3.2,0a1.6,1.6 0 1,0 -3.2,0M562.92,147.37a1.6,1.6 0 1,0 3.2,0a1.6,1.6 0 1,0 -3.2,0M565.57,146.16a1.6,1.6 0 1,0 3.2,0a1.6,1.6 0 1,0 -3.2,0M568.22,145.71a1.6,1.6 0 1,0 3.2,0a1.6,1.6 0 1,0 -3.2,0M570.88,145.07a1.6,1.6 0 1,0 3.2,0a1.6,1.6 0 1,0 -3.2,0M573.53,145.84a1.6,1.6 0 1,0 3.2,0a1.6,1.6 0 1,0 -3.2,0M576.18,145.90a1.6,1.6 0 1,0 3.2,0a1.6,1.6 0 1,0 -3.2,0M578.83,146.03a1.6,1.6 0 1,0 3.2,0a1.6,1.6 0 1,0 -3.2,0M581.48,145.96a1.6,1.6 0 1,0 3.2,0a1.6,1.6 0 1,0 -3.2,0M584.14,146.16a1.6,1.6 0 1,0 3.2,0a1.6,1.6 0 1,0 -3.2,0M586.79,146.22a1.6,1.6 0 1,0 3.2,0a1.6,1.6 0 1,0 -3.2,0M589.44,146.22a1.6,1.6 0 1,0 3.2,0a1.6,1.6 0 1,0 -3.2,0M592.09,146.73a1.6,1.6 0 1,0 3.2,0a1.6,1.6 0 1,0 -3.2,0M594.74,147.57a1.6,1.6 0 1,0 3.2,0a1.6,1.6 0 1,0 -3.2,0M597.40,148.40a1.6,1.6 0 1,0 3.2,0a1.6,1.6 0 1,0 -3.2,0M600.05,149.42a1.6,1.6 0 1,0 3.2,0a1.6,1.6 0 1,0 -3.2,0M602.70,150.71a1.6,1.6 0 1,0 3.2,0a1.6,1.6 0 1,0 -3.2,0M605.35,151.67a1.6,1.6 0 1,0 3.2,0a1.6,1.6 0 1,0 -3.2,0M608.00,151.79a1.6,1.6 0 1,0 3.2,0a1.6,1.6 0 1,0 -3.2,0M610.66,151.41a1.6,1.6 0 1,0 3.2,0a1.6,1.6 0 1,0 -3.2,0M613.31,152.24a1.6,1.6 0 1,0 3.2,0a1.6,1.6 0 1,0 -3.2,0M615.96,150.96a1.6,1.6 0 1,0 3.2,0a1.6,1.6 0 1,0 -3.2,0M618.61,149.55a1.6,1.6 0 1,0 3.2,0a1.6,1.6 0 1,0 -3.2,0M621.26,148.46a1.6,1.6 0 1,0 3.2,0a1.6,1.6 0 1,0 -3.2,0M623.92,149.04a1.6,1.6 0 1,0 3.2,0a1.6,1.6 0 1,0 -3.2,0M626.57,148.14a1.6,1.6 0 1,0 3.2,0a1.6,1.6 0 1,0 -3.2,0M629.22,148.51a1.6,1.6 0 1,0 3.2,0a1.6,1.6 0 1,0 -3.2,0M631.87,148.97a1.6,1.6 0 1,0 3.2,0a1.6,1.6 0 1,0 -3.2,0M634.52,149.23a1.6,1.6 0 1,0 3.2,0a1.6,1.6 0 1,0 -3.2,0M637.18,148.46a1.6,1.6 0 1,0 3.2,0a1.6,1.6 0 1,0 -3.2,0M639.83,147.77a1.6,1.6 0 1,0 3.2,0a1.6,1.6 0 1,0 -3.2,0M642.48,146.96a1.6,1.6 0 1,0 3.2,0a1.6,1.6 0 1,0 -3.2,0M645.13,146.62a1.6,1.6 0 1,0 3.2,0a1.6,1.6 0 1,0 -3.2,0M647.78,146.61a1.6,1.6 0 1,0 3.2,0a1.6,1.6 0 1,0 -3.2,0M650.44,146.49a1.6,1.6 0 1,0 3.2,0a1.6,1.6 0 1,0 -3.2,0M653.09,145.83a1.6,1.6 0 1,0 3.2,0a1.6,1.6 0 1,0 -3.2,0M655.74,145.77a1.6,1.6 0 1,0 3.2,0a1.6,1.6 0 1,0 -3.2,0M658.39,144.75a1.6,1.6 0 1,0 3.2,0a1.6,1.6 0 1,0 -3.2,0M661.04,144.14a1.6,1.6 0 1,0 3.2,0a1.6,1.6 0 1,0 -3.2,0M663.70,143.67a1.6,1.6 0 1,0 3.2,0a1.6,1.6 0 1,0 -3.2,0M666.35,143.61a1.6,1.6 0 1,0 3.2,0a1.6,1.6 0 1,0 -3.2,0M669.00,143.68a1.6,1.6 0 1,0 3.2,0a1.6,1.6 0 1,0 -3.2,0M671.65,143.99a1.6,1.6 0 1,0 3.2,0a1.6,1.6 0 1,0 -3.2,0M674.30,144.08a1.6,1.6 0 1,0 3.2,0a1.6,1.6 0 1,0 -3.2,0M676.96,144.23a1.6,1.6 0 1,0 3.2,0a1.6,1.6 0 1,0 -3.2,0M679.61,144.01a1.6,1.6 0 1,0 3.2,0a1.6,1.6 0 1,0 -3.2,0M682.26,143.66a1.6,1.6 0 1,0 3.2,0a1.6,1.6 0 1,0 -3.2,0M684.91,143.73a1.6,1.6 0 1,0 3.2,0a1.6,1.6 0 1,0 -3.2,0M687.56,144.27a1.6,1.6 0 1,0 3.2,0a1.6,1.6 0 1,0 -3.2,0M690.22,143.45a1.6,1.6 0 1,0 3.2,0a1.6,1.6 0 1,0 -3.2,0M692.87,143.42a1.6,1.6 0 1,0 3.2,0a1.6,1.6 0 1,0 -3.2,0M695.52,143.53a1.6,1.6 0 1,0 3.2,0a1.6,1.6 0 1,0 -3.2,0M698.17,143.66a1.6,1.6 0 1,0 3.2,0a1.6,1.6 0 1,0 -3.2,0M700.82,143.16a1.6,1.6 0 1,0 3.2,0a1.6,1.6 0 1,0 -3.2,0M703.48,143.53a1.6,1.6 0 1,0 3.2,0a1.6,1.6 0 1,0 -3.2,0M706.13,143.07a1.6,1.6 0 1,0 3.2,0a1.6,1.6 0 1,0 -3.2,0M708.78,143.15a1.6,1.6 0 1,0 3.2,0a1.6,1.6 0 1,0 -3.2,0M711.43,143.00a1.6,1.6 0 1,0 3.2,0a1.6,1.6 0 1,0 -3.2,0M714.08,142.94a1.6,1.6 0 1,0 3.2,0a1.6,1.6 0 1,0 -3.2,0M716.74,143.44a1.6,1.6 0 1,0 3.2,0a1.6,1.6 0 1,0 -3.2,0M719.39,144.44a1.6,1.6 0 1,0 3.2,0a1.6,1.6 0 1,0 -3.2,0M722.04,144.67a1.6,1.6 0 1,0 3.2,0a1.6,1.6 0 1,0 -3.2,0M724.69,144.78a1.6,1.6 0 1,0 3.2,0a1.6,1.6 0 1,0 -3.2,0M727.34,144.91a1.6,1.6 0 1,0 3.2,0a1.6,1.6 0 1,0 -3.2,0M730.00,144.50a1.6,1.6 0 1,0 3.2,0a1.6,1.6 0 1,0 -3.2,0M732.65,144.13a1.6,1.6 0 1,0 3.2,0a1.6,1.6 0 1,0 -3.2,0M735.30,143.73a1.6,1.6 0 1,0 3.2,0a1.6,1.6 0 1,0 -3.2,0M737.95,143.58a1.6,1.6 0 1,0 3.2,0a1.6,1.6 0 1,0 -3.2,0M740.60,143.35a1.6,1.6 0 1,0 3.2,0a1.6,1.6 0 1,0 -3.2,0M743.26,143.38a1.6,1.6 0 1,0 3.2,0a1.6,1.6 0 1,0 -3.2,0M745.91,143.41a1.6,1.6 0 1,0 3.2,0a1.6,1.6 0 1,0 -3.2,0M748.56,143.23a1.6,1.6 0 1,0 3.2,0a1.6,1.6 0 1,0 -3.2,0M751.21,142.99a1.6,1.6 0 1,0 3.2,0a1.6,1.6 0 1,0 -3.2,0M753.86,142.49a1.6,1.6 0 1,0 3.2,0a1.6,1.6 0 1,0 -3.2,0M756.52,142.83a1.6,1.6 0 1,0 3.2,0a1.6,1.6 0 1,0 -3.2,0M759.17,142.53a1.6,1.6 0 1,0 3.2,0a1.6,1.6 0 1,0 -3.2,0M761.82,142.59a1.6,1.6 0 1,0 3.2,0a1.6,1.6 0 1,0 -3.2,0M764.47,142.93a1.6,1.6 0 1,0 3.2,0a1.6,1.6 0 1,0 -3.2,0M767.12,143.77a1.6,1.6 0 1,0 3.2,0a1.6,1.6 0 1,0 -3.2,0M769.78,143.66a1.6,1.6 0 1,0 3.2,0a1.6,1.6 0 1,0 -3.2,0M772.43,144.10a1.6,1.6 0 1,0 3.2,0a1.6,1.6 0 1,0 -3.2,0M775.08,144.61a1.6,1.6 0 1,0 3.2,0a1.6,1.6 0 1,0 -3.2,0M777.73,144.52a1.6,1.6 0 1,0 3.2,0a1.6,1.6 0 1,0 -3.2,0M780.38,144.44a1.6,1.6 0 1,0 3.2,0a1.6,1.6 0 1,0 -3.2,0M783.04,144.16a1.6,1.6 0 1,0 3.2,0a1.6,1.6 0 1,0 -3.2,0M785.69,144.12a1.6,1.6 0 1,0 3.2,0a1.6,1.6 0 1,0 -3.2,0M788.34,143.72a1.6,1.6 0 1,0 3.2,0a1.6,1.6 0 1,0 -3.2,0M790.99,143.68a1.6,1.6 0 1,0 3.2,0a1.6,1.6 0 1,0 -3.2,0M793.64,143.86a1.6,1.6 0 1,0 3.2,0a1.6,1.6 0 1,0 -3.2,0M796.30,144.47a1.6,1.6 0 1,0 3.2,0a1.6,1.6 0 1,0 -3.2,0M798.95,144.56a1.6,1.6 0 1,0 3.2,0a1.6,1.6 0 1,0 -3.2,0M801.60,144.61a1.6,1.6 0 1,0 3.2,0a1.6,1.6 0 1,0 -3.2,0M804.25,144.81a1.6,1.6 0 1,0 3.2,0a1.6,1.6 0 1,0 -3.2,0M806.90,144.97a1.6,1.6 0 1,0 3.2,0a1.6,1.6 0 1,0 -3.2,0M809.56,144.39a1.6,1.6 0 1,0 3.2,0a1.6,1.6 0 1,0 -3.2,0M812.21,144.75a1.6,1.6 0 1,0 3.2,0a1.6,1.6 0 1,0 -3.2,0M814.86,145.09a1.6,1.6 0 1,0 3.2,0a1.6,1.6 0 1,0 -3.2,0M817.51,145.49a1.6,1.6 0 1,0 3.2,0a1.6,1.6 0 1,0 -3.2,0M820.16,144.72a1.6,1.6 0 1,0 3.2,0a1.6,1.6 0 1,0 -3.2,0M822.82,145.13a1.6,1.6 0 1,0 3.2,0a1.6,1.6 0 1,0 -3.2,0M825.47,144.62a1.6,1.6 0 1,0 3.2,0a1.6,1.6 0 1,0 -3.2,0M828.12,144.35a1.6,1.6 0 1,0 3.2,0a1.6,1.6 0 1,0 -3.2,0M830.77,144.01a1.6,1.6 0 1,0 3.2,0a1.6,1.6 0 1,0 -3.2,0M833.42,144.55a1.6,1.6 0 1,0 3.2,0a1.6,1.6 0 1,0 -3.2,0M836.08,144.29a1.6,1.6 0 1,0 3.2,0a1.6,1.6 0 1,0 -3.2,0M838.73,144.00a1.6,1.6 0 1,0 3.2,0a1.6,1.6 0 1,0 -3.2,0M841.38,143.90a1.6,1.6 0 1,0 3.2,0a1.6,1.6 0 1,0 -3.2,0M844.03,143.88a1.6,1.6 0 1,0 3.2,0a1.6,1.6 0 1,0 -3.2,0M846.68,143.74a1.6,1.6 0 1,0 3.2,0a1.6,1.6 0 1,0 -3.2,0M849.34,143.81a1.6,1.6 0 1,0 3.2,0a1.6,1.6 0 1,0 -3.2,0M851.99,144.20a1.6,1.6 0 1,0 3.2,0a1.6,1.6 0 1,0 -3.2,0M854.64,144.16a1.6,1.6 0 1,0 3.2,0a1.6,1.6 0 1,0 -3.2,0M857.29,144.27a1.6,1.6 0 1,0 3.2,0a1.6,1.6 0 1,0 -3.2,0M859.94,144.30a1.6,1.6 0 1,0 3.2,0a1.6,1.6 0 1,0 -3.2,0M862.60,144.10a1.6,1.6 0 1,0 3.2,0a1.6,1.6 0 1,0 -3.2,0M865.25,143.92a1.6,1.6 0 1,0 3.2,0a1.6,1.6 0 1,0 -3.2,0M867.90,144.43a1.6,1.6 0 1,0 3.2,0a1.6,1.6 0 1,0 -3.2,0" fill="#1171BE"/>
<polyline points="76.55,120.49 79.20,119.16 81.86,120.32 84.51,120.82 87.16,122.99 89.81,124.48 92.46,124.48 95.12,124.48 97.77,124.48 100.42,122.49 103.07,125.82 105.72,127.15 108.38,127.15 111.03,125.32 113.68,125.32 116.33,124.15 118.98,125.48 121.64,126.31 124.29,126.31 126.94,125.32 129.59,125.32 132.24,126.31 134.90,125.32 137.55,125.32 140.20,125.32 142.85,125.32 145.50,125.32 148.16,125.32 150.81,125.82 153.46,126.31 156.11,126.31 158.76,126.31 161.42,126.31 164.07,126.31 166.72,127.48 169.37,127.48 172.02,126.31 174.68,127.15 177.33,127.48 179.98,127.48 182.63,127.48 185.28,128.31 187.94,128.31 190.59,128.31 193.24,128.31 195.89,128.31 198.54,129.48 201.20,127.98 203.85,127.98 206.50,128.31 209.15,129.48 211.80,129.48 214.46,130.47 217.11,130.47 219.76,130.47 222.41,130.47 225.06,131.31 227.72,130.47 230.37,130.47 233.02,131.64 235.67,132.47 238.32,132.14 240.98,131.31 243.63,132.14 246.28,132.47 248.93,133.30 251.58,132.14 254.24,134.47 256.89,134.47 259.54,134.13 262.19,134.47 264.84,134.47 267.50,132.97 270.15,135.30 272.80,135.47 275.45,135.30 278.10,134.47 280.76,136.96 283.41,135.47 286.06,136.96 288.71,135.47 291.36,135.30 294.02,135.47 296.67,137.13 299.32,136.13 301.97,135.30 304.62,136.13 307.28,138.29 309.93,139.13 312.58,136.63 315.23,139.13 317.88,140.29 320.54,140.29 323.19,140.29 325.84,138.29 328.49,138.29 331.14,138.29 333.80,138.29 336.45,137.13 339.10,141.62 341.75,139.96 344.40,139.46 347.06,141.12 349.71,139.46 352.36,141.12 355.01,142.12 357.66,143.29 360.32,142.45 362.97,143.29 365.62,141.29 368.27,141.29 370.92,144.12 373.58,141.96 376.23,141.29 378.88,141.29 381.53,145.28 384.18,144.12 386.84,141.29 389.49,145.28 392.14,142.12 394.79,142.45 397.44,144.62 400.10,142.84 402.75,142.84 405.40,145.84 408.05,145.54 410.70,142.65 413.36,144.84 416.01,146.84 418.66,145.64 421.31,143.84 423.96,145.54 426.62,145.34 429.27,143.34 431.92,143.34 434.57,143.34 437.22,142.55 439.88,143.14 442.53,143.34 445.18,147.84 447.83,143.34 450.48,143.34 453.14,143.34 455.79,143.34 458.44,146.84 461.09,143.34 463.74,143.34 466.40,143.34 469.05,145.54 471.70,143.34 474.35,144.84 477.00,142.55 479.66,146.34 482.31,146.54 484.96,146.54 487.61,143.54 490.26,143.54 492.92,146.84 495.57,145.64 498.22,143.64 500.87,146.34 503.52,146.54 506.18,146.84 508.83,146.84 511.48,145.84 514.13,147.84 516.78,145.54 519.44,143.64 522.09,143.64 524.74,146.84 527.39,143.64 530.04,143.64 532.70,145.54 535.35,146.84 538.00,143.64 540.65,145.84 543.30,143.64 545.96,146.84 548.61,146.84 551.26,143.64 553.91,143.64 556.56,145.84 559.22,145.84 561.87,143.84 564.52,147.14 567.17,143.64 569.82,145.84 572.48,146.84 575.13,146.84 577.78,147.34 580.43,146.54 583.08,144.84 585.74,143.64 588.39,146.84 591.04,143.64 593.69,145.54 596.34,146.84 599.00,143.64 601.65,144.84 604.30,143.64 606.95,145.54 609.60,143.64 612.26,143.34 614.91,143.64 617.56,142.55 620.21,143.34 622.86,142.97 625.52,144.02 628.17,142.97 630.82,143.72 633.47,144.02 636.12,143.34 638.78,143.34 641.43,144.09 644.08,141.85 646.73,141.85 649.38,143.34 652.04,144.09 654.69,141.10 657.34,142.97 659.99,143.34 662.64,144.47 665.30,141.47 667.95,142.60 670.60,143.34 673.25,142.97 675.90,141.10 678.56,143.34 681.21,143.34 683.86,143.34 686.51,143.34 689.16,143.34 691.82,142.22 694.47,141.85 697.12,141.47 699.77,139.98 702.42,141.47 705.08,142.97 707.73,141.85 710.38,139.98 713.03,141.10 715.68,141.47 718.34,142.60 720.99,143.72 723.64,143.34 726.29,143.72 728.94,142.22 731.60,141.10 734.25,143.72 736.90,139.98 739.55,142.22 742.20,143.72 744.86,139.98 747.51,142.60 750.16,141.10 752.81,140.35 755.46,142.60 758.12,143.34 760.77,141.10 763.42,140.35 766.07,143.72 768.72,142.60 771.38,141.47 774.03,142.22 776.68,141.10 779.33,141.85 781.98,142.22 784.64,139.98 787.29,140.35 789.94,141.47 792.59,141.47 795.24,141.47 797.90,143.34 800.55,141.10 803.20,140.87 805.85,141.32 808.50,141.47 811.16,144.09 813.81,141.32 816.46,140.87 819.11,140.72 821.76,140.57 824.42,140.43 827.07,140.35 829.72,140.72 832.37,142.60 835.02,141.85 837.68,141.62 840.33,141.47 842.98,141.17 845.63,141.02 848.28,140.72 850.94,140.57 853.59,140.50 856.24,140.43 858.89,140.35 861.54,140.57 864.20,140.72 866.85,140.72 869.50,140.87" fill="none" stroke="#EDB120" stroke-width="1.0" stroke-linejoin="round"/>
<path d="M74.95,120.49a1.6,1.6 0 1,0 3.2,0a1.6,1.6 0 1,0 -3.2,0M77.60,119.16a1.6,1.6 0 1,0 3.2,0a1.6,1.6 0 1,0 -3.2,0M80.26,120.32a1.6,1.6 0 1,0 3.2,0a1.6,1.6 0 1,0 -3.2,0M82.91,120.82a1.6,1.6 0 1,0 3.2,0a1.6,1.6 0 1,0 -3.2,0M85.56,122.99a1.6,1.6 0 1,0 3.2,0a1.6,1.6 0 1,0 -3.2,0M88.21,124.48a1.6,1.6 0 1,0 3.2,0a1.6,1.6 0 1,0 -3.2,0M90.86,124.48a1.6,1.6 0 1,0 3.2,0a1.6,1.6 0 1,0 -3.2,0M93.52,124.48a1.6,1.6 0 1,0 3.2,0a1.6,1.6 0 1,0 -3.2,0M96.17,124.48a1.6,1.6 0 1,0 3.2,0a1.6,1.6 0 1,0 -3.2,0M98.82,122.49a1.6,1.6 0 1,0 3.2,0a1.6,1.6 0 1,0 -3.2,0M101.47,125.82a1.6,1.6 0 1,0 3.2,0a1.6,1.6 0 1,0 -3.2,0M104.12,127.15a1.6,1.6 0 1,0 3.2,0a1.6,1.6 0 1,0 -3.2,0M106.78,127.15a1.6,1.6 0 1,0 3.2,0a1.6,1.6 0 1,0 -3.2,0M109.43,125.32a1.6,1.6 0 1,0 3.2,0a1.6,1.6 0 1,0 -3.2,0M112.08,125.32a1.6,1.6 0 1,0 3.2,0a1.6,1.6 0 1,0 -3.2,0M114.73,124.15a1.6,1.6 0 1,0 3.2,0a1.6,1.6 0 1,0 -3.2,0M117.38,125.48a1.6,1.6 0 1,0 3.2,0a1.6,1.6 0 1,0 -3.2,0M120.04,126.31a1.6,1.6 0 1,0 3.2,0a1.6,1.6 0 1,0 -3.2,0M122.69,126.31a1.6,1.6 0 1,0 3.2,0a1.6,1.6 0 1,0 -3.2,0M125.34,125.32a1.6,1.6 0 1,0 3.2,0a1.6,1.6 0 1,0 -3.2,0M127.99,125.32a1.6,1.6 0 1,0 3.2,0a1.6,1.6 0 1,0 -3.2,0M130.64,126.31a1.6,1.6 0 1,0 3.2,0a1.6,1.6 0 1,0 -3.2,0M133.30,125.32a1.6,1.6 0 1,0 3.2,0a1.6,1.6 0 1,0 -3.2,0M135.95,125.32a1.6,1.6 0 1,0 3.2,0a1.6,1.6 0 1,0 -3.2,0M138.60,125.32a1.6,1.6 0 1,0 3.2,0a1.6,1.6 0 1,0 -3.2,0M141.25,125.32a1.6,1.6 0 1,0 3.2,0a1.6,1.6 0 1,0 -3.2,0M143.90,125.32a1.6,1.6 0 1,0 3.2,0a1.6,1.6 0 1,0 -3.2,0M146.56,125.32a1.6,1.6 0 1,0 3.2,0a1.6,1.6 0 1,0 -3.2,0M149.21,125.82a1.6,1.6 0 1,0 3.2,0a1.6,1.6 0 1,0 -3.2,0M151.86,126.31a1.6,1.6 0 1,0 3.2,0a1.6,1.6 0 1,0 -3.2,0M154.51,126.31a1.6,1.6 0 1,0 3.2,0a1.6,1.6 0 1,0 -3.2,0M157.16,126.31a1.6,1.6 0 1,0 3.2,0a1.6,1.6 0 1,0 -3.2,0M159.82,126.31a1.6,1.6 0 1,0 3.2,0a1.6,1.6 0 1,0 -3.2,0M162.47,126.31a1.6,1.6 0 1,0 3.2,0a1.6,1.6 0 1,0 -3.2,0M165.12,127.48a1.6,1.6 0 1,0 3.2,0a1.6,1.6 0 1,0 -3.2,0M167.77,127.48a1.6,1.6 0 1,0 3.2,0a1.6,1.6 0 1,0 -3.2,0M170.42,126.31a1.6,1.6 0 1,0 3.2,0a1.6,1.6 0 1,0 -3.2,0M173.08,127.15a1.6,1.6 0 1,0 3.2,0a1.6,1.6 0 1,0 -3.2,0M175.73,127.48a1.6,1.6 0 1,0 3.2,0a1.6,1.6 0 1,0 -3.2,0M178.38,127.48a1.6,1.6 0 1,0 3.2,0a1.6,1.6 0 1,0 -3.2,0M181.03,127.48a1.6,1.6 0 1,0 3.2,0a1.6,1.6 0 1,0 -3.2,0M183.68,128.31a1.6,1.6 0 1,0 3.2,0a1.6,1.6 0 1,0 -3.2,0M186.34,128.31a1.6,1.6 0 1,0 3.2,0a1.6,1.6 0 1,0 -3.2,0M188.99,128.31a1.6,1.6 0 1,0 3.2,0a1.6,1.6 0 1,0 -3.2,0M191.64,128.31a1.6,1.6 0 1,0 3.2,0a1.6,1.6 0 1,0 -3.2,0M194.29,128.31a1.6,1.6 0 1,0 3.2,0a1.6,1.6 0 1,0 -3.2,0M196.94,129.48a1.6,1.6 0 1,0 3.2,0a1.6,1.6 0 1,0 -3.2,0M199.60,127.98a1.6,1.6 0 1,0 3.2,0a1.6,1.6 0 1,0 -3.2,0M202.25,127.98a1.6,1.6 0 1,0 3.2,0a1.6,1.6 0 1,0 -3.2,0M204.90,128.31a1.6,1.6 0 1,0 3.2,0a1.6,1.6 0 1,0 -3.2,0M207.55,129.48a1.6,1.6 0 1,0 3.2,0a1.6,1.6 0 1,0 -3.2,0M210.20,129.48a1.6,1.6 0 1,0 3.2,0a1.6,1.6 0 1,0 -3.2,0M212.86,130.47a1.6,1.6 0 1,0 3.2,0a1.6,1.6 0 1,0 -3.2,0M215.51,130.47a1.6,1.6 0 1,0 3.2,0a1.6,1.6 0 1,0 -3.2,0M218.16,130.47a1.6,1.6 0 1,0 3.2,0a1.6,1.6 0 1,0 -3.2,0M220.81,130.47a1.6,1.6 0 1,0 3.2,0a1.6,1.6 0 1,0 -3.2,0M223.46,131.31a1.6,1.6 0 1,0 3.2,0a1.6,1.6 0 1,0 -3.2,0M226.12,130.47a1.6,1.6 0 1,0 3.2,0a1.6,1.6 0 1,0 -3.2,0M228.77,130.47a1.6,1.6 0 1,0 3.2,0a1.6,1.6 0 1,0 -3.2,0M231.42,131.64a1.6,1.6 0 1,0 3.2,0a1.6,1.6 0 1,0 -3.2,0M234.07,132.47a1.6,1.6 0 1,0 3.2,0a1.6,1.6 0 1,0 -3.2,0M236.72,132.14a1.6,1.6 0 1,0 3.2,0a1.6,1.6 0 1,0 -3.2,0M239.38,131.31a1.6,1.6 0 1,0 3.2,0a1.6,1.6 0 1,0 -3.2,0M242.03,132.14a1.6,1.6 0 1,0 3.2,0a1.6,1.6 0 1,0 -3.2,0M244.68,132.47a1.6,1.6 0 1,0 3.2,0a1.6,1.6 0 1,0 -3.2,0M247.33,133.30a1.6,1.6 0 1,0 3.2,0a1.6,1.6 0 1,0 -3.2,0M249.98,132.14a1.6,1.6 0 1,0 3.2,0a1.6,1.6 0 1,0 -3.2,0M252.64,134.47a1.6,1.6 0 1,0 3.2,0a1.6,1.6 0 1,0 -3.2,0M255.29,134.47a1.6,1.6 0 1,0 3.2,0a1.6,1.6 0 1,0 -3.2,0M257.94,134.13a1.6,1.6 0 1,0 3.2,0a1.6,1.6 0 1,0 -3.2,0M260.59,134.47a1.6,1.6 0 1,0 3.2,0a1.6,1.6 0 1,0 -3.2,0M263.24,134.47a1.6,1.6 0 1,0 3.2,0a1.6,1.6 0 1,0 -3.2,0M265.90,132.97a1.6,1.6 0 1,0 3.2,0a1.6,1.6 0 1,0 -3.2,0M268.55,135.30a1.6,1.6 0 1,0 3.2,0a1.6,1.6 0 1,0 -3.2,0M271.20,135.47a1.6,1.6 0 1,0 3.2,0a1.6,1.6 0 1,0 -3.2,0M273.85,135.30a1.6,1.6 0 1,0 3.2,0a1.6,1.6 0 1,0 -3.2,0M276.50,134.47a1.6,1.6 0 1,0 3.2,0a1.6,1.6 0 1,0 -3.2,0M279.16,136.96a1.6,1.6 0 1,0 3.2,0a1.6,1.6 0 1,0 -3.2,0M281.81,135.47a1.6,1.6 0 1,0 3.2,0a1.6,1.6 0 1,0 -3.2,0M284.46,136.96a1.6,1.6 0 1,0 3.2,0a1.6,1.6 0 1,0 -3.2,0M287.11,135.47a1.6,1.6 0 1,0 3.2,0a1.6,1.6 0 1,0 -3.2,0M289.76,135.30a1.6,1.6 0 1,0 3.2,0a1.6,1.6 0 1,0 -3.2,0M292.42,135.47a1.6,1.6 0 1,0 3.2,0a1.6,1.6 0 1,0 -3.2,0M295.07,137.13a1.6,1.6 0 1,0 3.2,0a1.6,1.6 0 1,0 -3.2,0M297.72,136.13a1.6,1.6 0 1,0 3.2,0a1.6,1.6 0 1,0 -3.2,0M300.37,135.30a1.6,1.6 0 1,0 3.2,0a1.6,1.6 0 1,0 -3.2,0M303.02,136.13a1.6,1.6 0 1,0 3.2,0a1.6,1.6 0 1,0 -3.2,0M305.68,138.29a1.6,1.6 0 1,0 3.2,0a1.6,1.6 0 1,0 -3.2,0M308.33,139.13a1.6,1.6 0 1,0 3.2,0a1.6,1.6 0 1,0 -3.2,0M310.98,136.63a1.6,1.6 0 1,0 3.2,0a1.6,1.6 0 1,0 -3.2,0M313.63,139.13a1.6,1.6 0 1,0 3.2,0a1.6,1.6 0 1,0 -3.2,0M316.28,140.29a1.6,1.6 0 1,0 3.2,0a1.6,1.6 0 1,0 -3.2,0M318.94,140.29a1.6,1.6 0 1,0 3.2,0a1.6,1.6 0 1,0 -3.2,0M321.59,140.29a1.6,1.6 0 1,0 3.2,0a1.6,1.6 0 1,0 -3.2,0M324.24,138.29a1.6,1.6 0 1,0 3.2,0a1.6,1.6 0 1,0 -3.2,0M326.89,138.29a1.6,1.6 0 1,0 3.2,0a1.6,1.6 0 1,0 -3.2,0M329.54,138.29a1.6,1.6 0 1,0 3.2,0a1.6,1.6 0 1,0 -3.2,0M332.20,138.29a1.6,1.6 0 1,0 3.2,0a1.6,1.6 0 1,0 -3.2,0M334.85,137.13a1.6,1.6 0 1,0 3.2,0a1.6,1.6 0 1,0 -3.2,0M337.50,141.62a1.6,1.6 0 1,0 3.2,0a1.6,1.6 0 1,0 -3.2,0M340.15,139.96a1.6,1.6 0 1,0 3.2,0a1.6,1.6 0 1,0 -3.2,0M342.80,139.46a1.6,1.6 0 1,0 3.2,0a1.6,1.6 0 1,0 -3.2,0M345.46,141.12a1.6,1.6 0 1,0 3.2,0a1.6,1.6 0 1,0 -3.2,0M348.11,139.46a1.6,1.6 0 1,0 3.2,0a1.6,1.6 0 1,0 -3.2,0M350.76,141.12a1.6,1.6 0 1,0 3.2,0a1.6,1.6 0 1,0 -3.2,0M353.41,142.12a1.6,1.6 0 1,0 3.2,0a1.6,1.6 0 1,0 -3.2,0M356.06,143.29a1.6,1.6 0 1,0 3.2,0a1.6,1.6 0 1,0 -3.2,0M358.72,142.45a1.6,1.6 0 1,0 3.2,0a1.6,1.6 0 1,0 -3.2,0M361.37,143.29a1.6,1.6 0 1,0 3.2,0a1.6,1.6 0 1,0 -3.2,0M364.02,141.29a1.6,1.6 0 1,0 3.2,0a1.6,1.6 0 1,0 -3.2,0M366.67,141.29a1.6,1.6 0 1,0 3.2,0a1.6,1.6 0 1,0 -3.2,0M369.32,144.12a1.6,1.6 0 1,0 3.2,0a1.6,1.6 0 1,0 -3.2,0M371.98,141.96a1.6,1.6 0 1,0 3.2,0a1.6,1.6 0 1,0 -3.2,0M374.63,141.29a1.6,1.6 0 1,0 3.2,0a1.6,1.6 0 1,0 -3.2,0M377.28,141.29a1.6,1.6 0 1,0 3.2,0a1.6,1.6 0 1,0 -3.2,0M379.93,145.28a1.6,1.6 0 1,0 3.2,0a1.6,1.6 0 1,0 -3.2,0M382.58,144.12a1.6,1.6 0 1,0 3.2,0a1.6,1.6 0 1,0 -3.2,0M385.24,141.29a1.6,1.6 0 1,0 3.2,0a1.6,1.6 0 1,0 -3.2,0M387.89,145.28a1.6,1.6 0 1,0 3.2,0a1.6,1.6 0 1,0 -3.2,0M390.54,142.12a1.6,1.6 0 1,0 3.2,0a1.6,1.6 0 1,0 -3.2,0M393.19,142.45a1.6,1.6 0 1,0 3.2,0a1.6,1.6 0 1,0 -3.2,0M395.84,144.62a1.6,1.6 0 1,0 3.2,0a1.6,1.6 0 1,0 -3.2,0M398.50,142.84a1.6,1.6 0 1,0 3.2,0a1.6,1.6 0 1,0 -3.2,0M401.15,142.84a1.6,1.6 0 1,0 3.2,0a1.6,1.6 0 1,0 -3.2,0M403.80,145.84a1.6,1.6 0 1,0 3.2,0a1.6,1.6 0 1,0 -3.2,0M406.45,145.54a1.6,1.6 0 1,0 3.2,0a1.6,1.6 0 1,0 -3.2,0M409.10,142.65a1.6,1.6 0 1,0 3.2,0a1.6,1.6 0 1,0 -3.2,0M411.76,144.84a1.6,1.6 0 1,0 3.2,0a1.6,1.6 0 1,0 -3.2,0M414.41,146.84a1.6,1.6 0 1,0 3.2,0a1.6,1.6 0 1,0 -3.2,0M417.06,145.64a1.6,1.6 0 1,0 3.2,0a1.6,1.6 0 1,0 -3.2,0M419.71,143.84a1.6,1.6 0 1,0 3.2,0a1.6,1.6 0 1,0 -3.2,0M422.36,145.54a1.6,1.6 0 1,0 3.2,0a1.6,1.6 0 1,0 -3.2,0M425.02,145.34a1.6,1.6 0 1,0 3.2,0a1.6,1.6 0 1,0 -3.2,0M427.67,143.34a1.6,1.6 0 1,0 3.2,0a1.6,1.6 0 1,0 -3.2,0M430.32,143.34a1.6,1.6 0 1,0 3.2,0a1.6,1.6 0 1,0 -3.2,0M432.97,143.34a1.6,1.6 0 1,0 3.2,0a1.6,1.6 0 1,0 -3.2,0M435.62,142.55a1.6,1.6 0 1,0 3.2,0a1.6,1.6 0 1,0 -3.2,0M438.28,143.14a1.6,1.6 0 1,0 3.2,0a1.6,1.6 0 1,0 -3.2,0M440.93,143.34a1.6,1.6 0 1,0 3.2,0a1.6,1.6 0 1,0 -3.2,0M443.58,147.84a1.6,1.6 0 1,0 3.2,0a1.6,1.6 0 1,0 -3.2,0M446.23,143.34a1.6,1.6 0 1,0 3.2,0a1.6,1.6 0 1,0 -3.2,0M448.88,143.34a1.6,1.6 0 1,0 3.2,0a1.6,1.6 0 1,0 -3.2,0M451.54,143.34a1.6,1.6 0 1,0 3.2,0a1.6,1.6 0 1,0 -3.2,0M454.19,143.34a1.6,1.6 0 1,0 3.2,0a1.6,1.6 0 1,0 -3.2,0M456.84,146.84a1.6,1.6 0 1,0 3.2,0a1.6,1.6 0 1,0 -3.2,0M459.49,143.34a1.6,1.6 0 1,0 3.2,0a1.6,1.6 0 1,0 -3.2,0M462.14,143.34a1.6,1.6 0 1,0 3.2,0a1.6,1.6 0 1,0 -3.2,0M464.80,143.34a1.6,1.6 0 1,0 3.2,0a1.6,1.6 0 1,0 -3.2,0M467.45,145.54a1.6,1.6 0 1,0 3.2,0a1.6,1.6 0 1,0 -3.2,0M470.10,143.34a1.6,1.6 0 1,0 3.2,0a1.6,1.6 0 1,0 -3.2,0M472.75,144.84a1.6,1.6 0 1,0 3.2,0a1.6,1.6 0 1,0 -3.2,0M475.40,142.55a1.6,1.6 0 1,0 3.2,0a1.6,1.6 0 1,0 -3.2,0M478.06,146.34a1.6,1.6 0 1,0 3.2,0a1.6,1.6 0 1,0 -3.2,0M480.71,146.54a1.6,1.6 0 1,0 3.2,0a1.6,1.6 0 1,0 -3.2,0M483.36,146.54a1.6,1.6 0 1,0 3.2,0a1.6,1.6 0 1,0 -3.2,0M486.01,143.54a1.6,1.6 0 1,0 3.2,0a1.6,1.6 0 1,0 -3.2,0M488.66,143.54a1.6,1.6 0 1,0 3.2,0a1.6,1.6 0 1,0 -3.2,0M491.32,146.84a1.6,1.6 0 1,0 3.2,0a1.6,1.6 0 1,0 -3.2,0M493.97,145.64a1.6,1.6 0 1,0 3.2,0a1.6,1.6 0 1,0 -3.2,0M496.62,143.64a1.6,1.6 0 1,0 3.2,0a1.6,1.6 0 1,0 -3.2,0M499.27,146.34a1.6,1.6 0 1,0 3.2,0a1.6,1.6 0 1,0 -3.2,0M501.92,146.54a1.6,1.6 0 1,0 3.2,0a1.6,1.6 0 1,0 -3.2,0M504.58,146.84a1.6,1.6 0 1,0 3.2,0a1.6,1.6 0 1,0 -3.2,0M507.23,146.84a1.6,1.6 0 1,0 3.2,0a1.6,1.6 0 1,0 -3.2,0M509.88,145.84a1.6,1.6 0 1,0 3.2,0a1.6,1.6 0 1,0 -3.2,0M512.53,147.84a1.6,1.6 0 1,0 3.2,0a1.6,1.6 0 1,0 -3.2,0M515.18,145.54a1.6,1.6 0 1,0 3.2,0a1.6,1.6 0 1,0 -3.2,0M517.84,143.64a1.6,1.6 0 1,0 3.2,0a1.6,1.6 0 1,0 -3.2,0M520.49,143.64a1.6,1.6 0 1,0 3.2,0a1.6,1.6 0 1,0 -3.2,0M523.14,146.84a1.6,1.6 0 1,0 3.2,0a1.6,1.6 0 1,0 -3.2,0M525.79,143.64a1.6,1.6 0 1,0 3.2,0a1.6,1.6 0 1,0 -3.2,0M528.44,143.64a1.6,1.6 0 1,0 3.2,0a1.6,1.6 0 1,0 -3.2,0M531.10,145.54a1.6,1.6 0 1,0 3.2,0a1.6,1.6 0 1,0 -3.2,0M533.75,146.84a1.6,1.6 0 1,0 3.2,0a1.6,1.6 0 1,0 -3.2,0M536.40,143.64a1.6,1.6 0 1,0 3.2,0a1.6,1.6 0 1,0 -3.2,0M539.05,145.84a1.6,1.6 0 1,0 3.2,0a1.6,1.6 0 1,0 -3.2,0M541.70,143.64a1.6,1.6 0 1,0 3.2,0a1.6,1.6 0 1,0 -3.2,0M544.36,146.84a1.6,1.6 0 1,0 3.2,0a1.6,1.6 0 1,0 -3.2,0M547.01,146.84a1.6,1.6 0 1,0 3.2,0a1.6,1.6 0 1,0 -3.2,0M549.66,143.64a1.6,1.6 0 1,0 3.2,0a1.6,1.6 0 1,0 -3.2,0M552.31,143.64a1.6,1.6 0 1,0 3.2,0a1.6,1.6 0 1,0 -3.2,0M554.96,145.84a1.6,1.6 0 1,0 3.2,0a1.6,1.6 0 1,0 -3.2,0M557.62,145.84a1.6,1.6 0 1,0 3.2,0a1.6,1.6 0 1,0 -3.2,0M560.27,143.84a1.6,1.6 0 1,0 3.2,0a1.6,1.6 0 1,0 -3.2,0M562.92,147.14a1.6,1.6 0 1,0 3.2,0a1.6,1.6 0 1,0 -3.2,0M565.57,143.64a1.6,1.6 0 1,0 3.2,0a1.6,1.6 0 1,0 -3.2,0M568.22,145.84a1.6,1.6 0 1,0 3.2,0a1.6,1.6 0 1,0 -3.2,0M570.88,146.84a1.6,1.6 0 1,0 3.2,0a1.6,1.6 0 1,0 -3.2,0M573.53,146.84a1.6,1.6 0 1,0 3.2,0a1.6,1.6 0 1,0 -3.2,0M576.18,147.34a1.6,1.6 0 1,0 3.2,0a1.6,1.6 0 1,0 -3.2,0M578.83,146.54a1.6,1.6 0 1,0 3.2,0a1.6,1.6 0 1,0 -3.2,0M581.48,144.84a1.6,1.6 0 1,0 3.2,0a1.6,1.6 0 1,0 -3.2,0M584.14,143.64a1.6,1.6 0 1,0 3.2,0a1.6,1.6 0 1,0 -3.2,0M586.79,146.84a1.6,1.6 0 1,0 3.2,0a1.6,1.6 0 1,0 -3.2,0M589.44,143.64a1.6,1.6 0 1,0 3.2,0a1.6,1.6 0 1,0 -3.2,0M592.09,145.54a1.6,1.6 0 1,0 3.2,0a1.6,1.6 0 1,0 -3.2,0M594.74,146.84a1.6,1.6 0 1,0 3.2,0a1.6,1.6 0 1,0 -3.2,0M597.40,143.64a1.6,1.6 0 1,0 3.2,0a1.6,1.6 0 1,0 -3.2,0M600.05,144.84a1.6,1.6 0 1,0 3.2,0a1.6,1.6 0 1,0 -3.2,0M602.70,143.64a1.6,1.6 0 1,0 3.2,0a1.6,1.6 0 1,0 -3.2,0M605.35,145.54a1.6,1.6 0 1,0 3.2,0a1.6,1.6 0 1,0 -3.2,0M608.00,143.64a1.6,1.6 0 1,0 3.2,0a1.6,1.6 0 1,0 -3.2,0M610.66,143.34a1.6,1.6 0 1,0 3.2,0a1.6,1.6 0 1,0 -3.2,0M613.31,143.64a1.6,1.6 0 1,0 3.2,0a1.6,1.6 0 1,0 -3.2,0M615.96,142.55a1.6,1.6 0 1,0 3.2,0a1.6,1.6 0 1,0 -3.2,0M618.61,143.34a1.6,1.6 0 1,0 3.2,0a1.6,1.6 0 1,0 -3.2,0M621.26,142.97a1.6,1.6 0 1,0 3.2,0a1.6,1.6 0 1,0 -3.2,0M623.92,144.02a1.6,1.6 0 1,0 3.2,0a1.6,1.6 0 1,0 -3.2,0M626.57,142.97a1.6,1.6 0 1,0 3.2,0a1.6,1.6 0 1,0 -3.2,0M629.22,143.72a1.6,1.6 0 1,0 3.2,0a1.6,1.6 0 1,0 -3.2,0M631.87,144.02a1.6,1.6 0 1,0 3.2,0a1.6,1.6 0 1,0 -3.2,0M634.52,143.34a1.6,1.6 0 1,0 3.2,0a1.6,1.6 0 1,0 -3.2,0M637.18,143.34a1.6,1.6 0 1,0 3.2,0a1.6,1.6 0 1,0 -3.2,0M639.83,144.09a1.6,1.6 0 1,0 3.2,0a1.6,1.6 0 1,0 -3.2,0M642.48,141.85a1.6,1.6 0 1,0 3.2,0a1.6,1.6 0 1,0 -3.2,0M645.13,141.85a1.6,1.6 0 1,0 3.2,0a1.6,1.6 0 1,0 -3.2,0M647.78,143.34a1.6,1.6 0 1,0 3.2,0a1.6,1.6 0 1,0 -3.2,0M650.44,144.09a1.6,1.6 0 1,0 3.2,0a1.6,1.6 0 1,0 -3.2,0M653.09,141.10a1.6,1.6 0 1,0 3.2,0a1.6,1.6 0 1,0 -3.2,0M655.74,142.97a1.6,1.6 0 1,0 3.2,0a1.6,1.6 0 1,0 -3.2,0M658.39,143.34a1.6,1.6 0 1,0 3.2,0a1.6,1.6 0 1,0 -3.2,0M661.04,144.47a1.6,1.6 0 1,0 3.2,0a1.6,1.6 0 1,0 -3.2,0M663.70,141.47a1.6,1.6 0 1,0 3.2,0a1.6,1.6 0 1,0 -3.2,0M666.35,142.60a1.6,1.6 0 1,0 3.2,0a1.6,1.6 0 1,0 -3.2,0M669.00,143.34a1.6,1.6 0 1,0 3.2,0a1.6,1.6 0 1,0 -3.2,0M671.65,142.97a1.6,1.6 0 1,0 3.2,0a1.6,1.6 0 1,0 -3.2,0M674.30,141.10a1.6,1.6 0 1,0 3.2,0a1.6,1.6 0 1,0 -3.2,0M676.96,143.34a1.6,1.6 0 1,0 3.2,0a1.6,1.6 0 1,0 -3.2,0M679.61,143.34a1.6,1.6 0 1,0 3.2,0a1.6,1.6 0 1,0 -3.2,0M682.26,143.34a1.6,1.6 0 1,0 3.2,0a1.6,1.6 0 1,0 -3.2,0M684.91,143.34a1.6,1.6 0 1,0 3.2,0a1.6,1.6 0 1,0 -3.2,0M687.56,143.34a1.6,1.6 0 1,0 3.2,0a1.6,1.6 0 1,0 -3.2,0M690.22,142.22a1.6,1.6 0 1,0 3.2,0a1.6,1.6 0 1,0 -3.2,0M692.87,141.85a1.6,1.6 0 1,0 3.2,0a1.6,1.6 0 1,0 -3.2,0M695.52,141.47a1.6,1.6 0 1,0 3.2,0a1.6,1.6 0 1,0 -3.2,0M698.17,139.98a1.6,1.6 0 1,0 3.2,0a1.6,1.6 0 1,0 -3.2,0M700.82,141.47a1.6,1.6 0 1,0 3.2,0a1.6,1.6 0 1,0 -3.2,0M703.48,142.97a1.6,1.6 0 1,0 3.2,0a1.6,1.6 0 1,0 -3.2,0M706.13,141.85a1.6,1.6 0 1,0 3.2,0a1.6,1.6 0 1,0 -3.2,0M708.78,139.98a1.6,1.6 0 1,0 3.2,0a1.6,1.6 0 1,0 -3.2,0M711.43,141.10a1.6,1.6 0 1,0 3.2,0a1.6,1.6 0 1,0 -3.2,0M714.08,141.47a1.6,1.6 0 1,0 3.2,0a1.6,1.6 0 1,0 -3.2,0M716.74,142.60a1.6,1.6 0 1,0 3.2,0a1.6,1.6 0 1,0 -3.2,0M719.39,143.72a1.6,1.6 0 1,0 3.2,0a1.6,1.6 0 1,0 -3.2,0M722.04,143.34a1.6,1.6 0 1,0 3.2,0a1.6,1.6 0 1,0 -3.2,0M724.69,143.72a1.6,1.6 0 1,0 3.2,0a1.6,1.6 0 1,0 -3.2,0M727.34,142.22a1.6,1.6 0 1,0 3.2,0a1.6,1.6 0 1,0 -3.2,0M730.00,141.10a1.6,1.6 0 1,0 3.2,0a1.6,1.6 0 1,0 -3.2,0M732.65,143.72a1.6,1.6 0 1,0 3.2,0a1.6,1.6 0 1,0 -3.2,0M735.30,139.98a1.6,1.6 0 1,0 3.2,0a1.6,1.6 0 1,0 -3.2,0M737.95,142.22a1.6,1.6 0 1,0 3.2,0a1.6,1.6 0 1,0 -3.2,0M740.60,143.72a1.6,1.6 0 1,0 3.2,0a1.6,1.6 0 1,0 -3.2,0M743.26,139.98a1.6,1.6 0 1,0 3.2,0a1.6,1.6 0 1,0 -3.2,0M745.91,142.60a1.6,1.6 0 1,0 3.2,0a1.6,1.6 0 1,0 -3.2,0M748.56,141.10a1.6,1.6 0 1,0 3.2,0a1.6,1.6 0 1,0 -3.2,0M751.21,140.35a1.6,1.6 0 1,0 3.2,0a1.6,1.6 0 1,0 -3.2,0M753.86,142.60a1.6,1.6 0 1,0 3.2,0a1.6,1.6 0 1,0 -3.2,0M756.52,143.34a1.6,1.6 0 1,0 3.2,0a1.6,1.6 0 1,0 -3.2,0M759.17,141.10a1.6,1.6 0 1,0 3.2,0a1.6,1.6 0 1,0 -3.2,0M761.82,140.35a1.6,1.6 0 1,0 3.2,0a1.6,1.6 0 1,0 -3.2,0M764.47,143.72a1.6,1.6 0 1,0 3.2,0a1.6,1.6 0 1,0 -3.2,0M767.12,142.60a1.6,1.6 0 1,0 3.2,0a1.6,1.6 0 1,0 -3.2,0M769.78,141.47a1.6,1.6 0 1,0 3.2,0a1.6,1.6 0 1,0 -3.2,0M772.43,142.22a1.6,1.6 0 1,0 3.2,0a1.6,1.6 0 1,0 -3.2,0M775.08,141.10a1.6,1.6 0 1,0 3.2,0a1.6,1.6 0 1,0 -3.2,0M777.73,141.85a1.6,1.6 0 1,0 3.2,0a1.6,1.6 0 1,0 -3.2,0M780.38,142.22a1.6,1.6 0 1,0 3.2,0a1.6,1.6 0 1,0 -3.2,0M783.04,139.98a1.6,1.6 0 1,0 3.2,0a1.6,1.6 0 1,0 -3.2,0M785.69,140.35a1.6,1.6 0 1,0 3.2,0a1.6,1.6 0 1,0 -3.2,0M788.34,141.47a1.6,1.6 0 1,0 3.2,0a1.6,1.6 0 1,0 -3.2,0M790.99,141.47a1.6,1.6 0 1,0 3.2,0a1.6,1.6 0 1,0 -3.2,0M793.64,141.47a1.6,1.6 0 1,0 3.2,0a1.6,1.6 0 1,0 -3.2,0M796.30,143.34a1.6,1.6 0 1,0 3.2,0a1.6,1.6 0 1,0 -3.2,0M798.95,141.10a1.6,1.6 0 1,0 3.2,0a1.6,1.6 0 1,0 -3.2,0M801.60,140.87a1.6,1.6 0 1,0 3.2,0a1.6,1.6 0 1,0 -3.2,0M804.25,141.32a1.6,1.6 0 1,0 3.2,0a1.6,1.6 0 1,0 -3.2,0M806.90,141.47a1.6,1.6 0 1,0 3.2,0a1.6,1.6 0 1,0 -3.2,0M809.56,144.09a1.6,1.6 0 1,0 3.2,0a1.6,1.6 0 1,0 -3.2,0M812.21,141.32a1.6,1.6 0 1,0 3.2,0a1.6,1.6 0 1,0 -3.2,0M814.86,140.87a1.6,1.6 0 1,0 3.2,0a1.6,1.6 0 1,0 -3.2,0M817.51,140.72a1.6,1.6 0 1,0 3.2,0a1.6,1.6 0 1,0 -3.2,0M820.16,140.57a1.6,1.6 0 1,0 3.2,0a1.6,1.6 0 1,0 -3.2,0M822.82,140.43a1.6,1.6 0 1,0 3.2,0a1.6,1.6 0 1,0 -3.2,0M825.47,140.35a1.6,1.6 0 1,0 3.2,0a1.6,1.6 0 1,0 -3.2,0M828.12,140.72a1.6,1.6 0 1,0 3.2,0a1.6,1.6 0 1,0 -3.2,0M830.77,142.60a1.6,1.6 0 1,0 3.2,0a1.6,1.6 0 1,0 -3.2,0M833.42,141.85a1.6,1.6 0 1,0 3.2,0a1.6,1.6 0 1,0 -3.2,0M836.08,141.62a1.6,1.6 0 1,0 3.2,0a1.6,1.6 0 1,0 -3.2,0M838.73,141.47a1.6,1.6 0 1,0 3.2,0a1.6,1.6 0 1,0 -3.2,0M841.38,141.17a1.6,1.6 0 1,0 3.2,0a1.6,1.6 0 1,0 -3.2,0M844.03,141.02a1.6,1.6 0 1,0 3.2,0a1.6,1.6 0 1,0 -3.2,0M846.68,140.72a1.6,1.6 0 1,0 3.2,0a1.6,1.6 0 1,0 -3.2,0M849.34,140.57a1.6,1.6 0 1,0 3.2,0a1.6,1.6 0 1,0 -3.2,0M851.99,140.50a1.6,1.6 0 1,0 3.2,0a1.6,1.6 0 1,0 -3.2,0M854.64,140.43a1.6,1.6 0 1,0 3.2,0a1.6,1.6 0 1,0 -3.2,0M857.29,140.35a1.6,1.6 0 1,0 3.2,0a1.6,1.6 0 1,0 -3.2,0M859.94,140.57a1.6,1.6 0 1,0 3.2,0a1.6,1.6 0 1,0 -3.2,0M862.60,140.72a1.6,1.6 0 1,0 3.2,0a1.6,1.6 0 1,0 -3.2,0M865.25,140.72a1.6,1.6 0 1,0 3.2,0a1.6,1.6 0 1,0 -3.2,0M867.90,140.87a1.6,1.6 0 1,0 3.2,0a1.6,1.6 0 1,0 -3.2,0" fill="#EDB120"/>
<path d="M334.70,162.69L344.30,162.69M336.17,159.36L342.83,166.01M339.50,157.89L339.50,167.49M342.83,159.36L336.17,166.01" stroke="#D1048B" stroke-width="1.15" fill="none"/>
<path d="M599.90,153.08L609.50,153.08M601.37,149.75L608.03,156.40M604.70,148.28L604.70,157.88M608.03,149.75L601.37,156.40" stroke="#D1048B" stroke-width="1.15" fill="none"/>
<path d="M865.10,143.87L874.70,143.87M866.57,140.54L873.23,147.19M869.90,139.07L869.90,148.67M873.23,140.54L866.57,147.19" stroke="#D1048B" stroke-width="1.15" fill="none"/></g>
<text x="70" y="124.0" text-anchor="end">0</text><text x="70" y="188.1" text-anchor="end">-200</text><text x="70" y="252.1" text-anchor="end">-400</text><text x="70" y="316.2" text-anchor="end">-600</text><text x="70" y="380.3" text-anchor="end">-800</text><text x="70" y="445.1" text-anchor="end">-1000</text><text x="70" y="509.2" text-anchor="end">-1200</text><text x="70" y="573.3" text-anchor="end">-1400</text><text x="70" y="636.9" text-anchor="end">-1600</text><text x="70" y="700.9" text-anchor="end">-1800</text><text x="70" y="765.0" text-anchor="end">-2000</text><text x="74.3" y="775.7" text-anchor="middle">0</text><text x="207.1" y="775.7" text-anchor="middle">50</text><text x="340.1" y="775.7" text-anchor="middle">100</text><text x="472.1" y="775.7" text-anchor="middle">150</text><text x="605.1" y="775.7" text-anchor="middle">200</text><text x="737.1" y="775.7" text-anchor="middle">250</text><text x="870.1" y="775.7" text-anchor="middle">300</text>
<text x="473" y="114" text-anchor="middle" font-size="13.2" font-weight="bold">Episode reward for DoubleIntegratorContinuousAction with rlDDPGAgent</text>
<text x="473" y="791" text-anchor="middle" font-size="13.2">Episode Number</text>
<text transform="translate(32.6,441) rotate(-90)" text-anchor="middle" font-size="13.2">Episode Reward</text>
</svg>
<svg class="abs" style="left:772px;top:98px" width="100" height="22" viewBox="772 98 100 22" fill="none" stroke="#6e6e6e" stroke-width="1.1" stroke-linecap="round" stroke-linejoin="round">
 <!-- export -->
 <path d="M774.8,111.2v3.4h11.6v-3.4" stroke-width="1.2"/>
 <path d="M774.2,110.9h12.8" stroke="#a9a9a9" stroke-width="1.2"/>
 <path d="M776.7,112.2C776.9,107.6 779.2,104.7 782.4,104.4V102.2L786.7,105.5L782.4,108.8V106.8C780.4,107.1 778.7,108.9 778.3,112.2Z" fill="#f5f5f5" stroke-width="1.1"/>
 <path d="M786.2,116.4h4v-4.2z" fill="#5f5f5f" stroke="none"/>
 <!-- pan hand -->
 <path d="M799.8,116.4L795.1,110.1C794.2,108.8 795.6,107.6 796.7,108.5L798.1,109.8V103.4C798.1,101.9 800.4,101.9 800.4,103.4V102.6C800.4,100.8 803.8,100.8 803.8,102.6V103.3C803.8,101.7 807.1,101.7 807.1,103.5V105.8C807.1,104.3 809.7,104.3 809.7,106V109.6C809.7,112.6 808.6,114.6 807.6,116.4Z" stroke-width="1.2"/>
 <path d="M800.4,103.4v4.4M803.8,102.8v5M807.1,104v4.2" stroke-width="0.9"/>
 <!-- zoom in -->
 <circle cx="820.5" cy="107.5" r="5.9" stroke-width="1.25"/><path d="M817.3,107.5h6.4M820.5,104.3v6.4M825,112l4.6,4.6" stroke-width="1.25"/>
 <!-- zoom out -->
 <circle cx="840.5" cy="107.5" r="5.9" stroke-width="1.25"/><path d="M837.3,107.5h6.4M845,112l4.6,4.6" stroke-width="1.25"/>
 <!-- home -->
 <path d="M854.4,109.4L862,101.8L869.7,109.4M856.6,109.2V116.5H860V111.4H864V116.5H867.6V109.2" stroke-width="1.25" stroke-linecap="butt" stroke-linejoin="miter"/>
 <path d="M865.3,102.2h2.9v2.9z" fill="#5f5f5f" stroke="none"/>
</svg>
<div id="divider" class="abs"></div>
<div id="rhead" class="abs"></div>
<div class="t" style="left:907.5px;top:63px;font-size:12.9px;line-height:16px;height:16px;color:#1a1a1a">Training Progress</div>
<svg class="abs" style="left:1181px;top:64px" width="4" height="12" viewBox="0 0 4 12" fill="#555"><circle cx="2" cy="2" r="1"/><circle cx="2" cy="6" r="1"/><circle cx="2" cy="10" r="1"/></svg>
<div id="rpanel" class="abs"></div>
<div id="scroll" class="abs"></div>
<svg class="abs" style="left:1184px;top:82px" width="17" height="733" viewBox="0 0 17 733" fill="#a0a0a0"><path d="M4.4,11.6l3.8-4.4l3.8,4.4z"/><path d="M4.4,719.8l3.8,4.4l3.8-4.4z"/></svg>

<!-- progress -->
<div class="abs" style="left:911px;top:97px;width:143px;height:15px;background:#fff"></div>
<div class="abs" style="left:911px;top:97px;width:8px;height:15px;background:#1e88e5"></div>
<div class="btn" style="left:1064px;top:92px;width:110px;height:25px;border-color:#c4c4c4;color:#a3a3a3;line-height:23px;background:#f6f6f6">Training stopped</div>
<div class="t" style="left:911px;top:128px">Episode number:</div><div class="t" style="left:1033.4px;top:128px">300/5000</div>
<div class="t" style="left:911px;top:153px">Start time:</div><div class="t" style="left:1033.4px;top:153px">05-Nov-2024 13:25:19</div>
<div class="t" style="left:911px;top:178px">Duration:</div><div class="t" style="left:1033.4px;top:178px">00:10:02</div>
<div class="t" style="left:911px;top:203px">Final result:</div>
<div class="t" style="left:1033.4px;top:201.6px;line-height:15px;height:auto">Training finished after all<br>agents reached stop<br>training criteria.</div>

<!-- Training Information -->
<div class="grp" style="left:911px;top:258px;width:263px;height:295px"><div class="hd">Training Information</div></div>
<div class="abs" style="left:922px;top:289px;width:241px;height:95px;background:#fff;border:1px solid #7d7d7d"></div>
<div class="abs" style="left:923px;top:290px;width:239px;height:27px;background:#f4f4f4;border-bottom:1px solid #7d7d7d"></div>
<div class="abs" style="left:923px;top:317px;width:239px;height:25px;background:#2389da;border-bottom:1px solid #7d7d7d"></div>
<div class="abs" style="left:1042px;top:290px;width:1px;height:52px;background:#7d7d7d"></div>
<div class="t" style="left:926px;top:297px;font-weight:bold;color:#111">Agent</div>
<div class="t" style="left:1046px;top:297px;font-weight:bold;color:#111">Status</div>
<div class="t" style="left:926px;top:320px;color:#fff">rlDDPGAgent</div>
<div class="t" style="left:1046px;top:320px;color:#fff">Training finished</div>
<div class="t" style="left:922px;top:395px;font-weight:bold">Episode Information (rlDDPGAgent):</div>
<div class="t" style="left:922px;top:420px">Episode reward:</div><div class="t" style="left:1035px;top:420px">-78.3755</div>
<div class="t" style="left:922px;top:445px">Average reward:</div><div class="t" style="left:1035px;top:445px">-72.5135</div>
<div class="t" style="left:922px;top:470px">Episode Q0:</div><div class="t" style="left:1035px;top:470px">-66.9009</div>
<div class="t" style="left:922px;top:495px">Evaluation statis…</div><div class="t" style="left:1035px;top:495px">-73.2485</div>
<div class="btn" style="left:1053px;top:519px;width:110px;height:23px;line-height:21px">More Details...</div>

<!-- Plot Options -->
<div class="grp" style="left:911px;top:563px;width:263px;height:118px"><div class="hd">Plot Options</div></div>
<div class="cb" style="left:922px;top:595px"></div>
<div class="cb" style="left:922px;top:622px"></div>
<div class="cb" style="left:922px;top:652px"></div>
<svg class="abs" style="left:922px;top:595px" width="14" height="42" viewBox="0 0 14 42" fill="none" stroke="#1a1a1a" stroke-width="2"><path d="M2.7,6.9l2.9,3l5.6,-6.5"/><path d="M2.7,33.9l2.9,3l5.6,-6.5"/></svg>
<div class="t" style="left:939px;top:595px">Show EpisodeQ0</div>
<div class="t" style="left:939px;top:622px">Show evaluation statistic</div>
<div class="t" style="left:939px;top:651px">Show last N episodes</div>
<div class="abs" style="left:1066px;top:647px;width:97px;height:23px;border:1px solid #c6c6c6;background:#f6f6f6;color:#a3a3a3;text-align:right;padding-right:4px;line-height:22px">5000</div>

<!-- Legend -->
<div class="grp" style="left:911px;top:691px;width:263px;height:102px"></div>
<div class="abs" style="left:917px;top:697px;width:251px;height:90px;background:#fff"></div>
<svg class="abs" style="left:917px;top:697px;will-change:transform" width="251" height="90" viewBox="917 697 251 90" font-family="'Liberation Sans',sans-serif" font-size="10.76" fill="#262626">
 <path d="M964.3,704.5h40.4" stroke="#2FBEEF" stroke-width="1.1"/><circle cx="984.5" cy="704.5" r="1.5" fill="#2FBEEF"/>
 <path d="M964.3,723.5h40.4" stroke="#1171BE" stroke-width="1.2"/><circle cx="984.5" cy="723.5" r="1.5" fill="#1171BE"/>
 <path d="M964.3,742.5h40.4" stroke="#EDB120" stroke-width="1.1"/><circle cx="984.5" cy="742.5" r="1.5" fill="#EDB120"/>
 <path d="M979.3,770.5h10.4M984.5,765.3v10.4M980.8,766.8l7.4,7.4M988.2,766.8l-7.4,7.4" stroke="#D1048B" stroke-width="0.8"/>
 <text x="1008.4" y="708.2">Episode reward</text>
 <text x="1008.4" y="727.2">Average reward</text>
 <text x="1008.4" y="746.2">Episode Q0</text>
 <text x="1008.4" y="769.2">Evaluation statistic</text>
 <text x="1008.4" y="780.8">(MeanEpisodeReward)</text>
</svg>

<div id="status" class="abs"></div>
<svg class="abs" style="left:1184px;top:818px" width="14" height="16" viewBox="1184 818 14 16" fill="#8f8f8f"><path d="M1186,820.2l7,5.8l-7,5.8z"/><rect x="1193.1" y="820.2" width="1.9" height="11.6"/></svg>
<div id="frame"><i id="bt"></i><i id="bb"></i><i id="bl"></i><i id="br"></i></div>
</body>
</html>
